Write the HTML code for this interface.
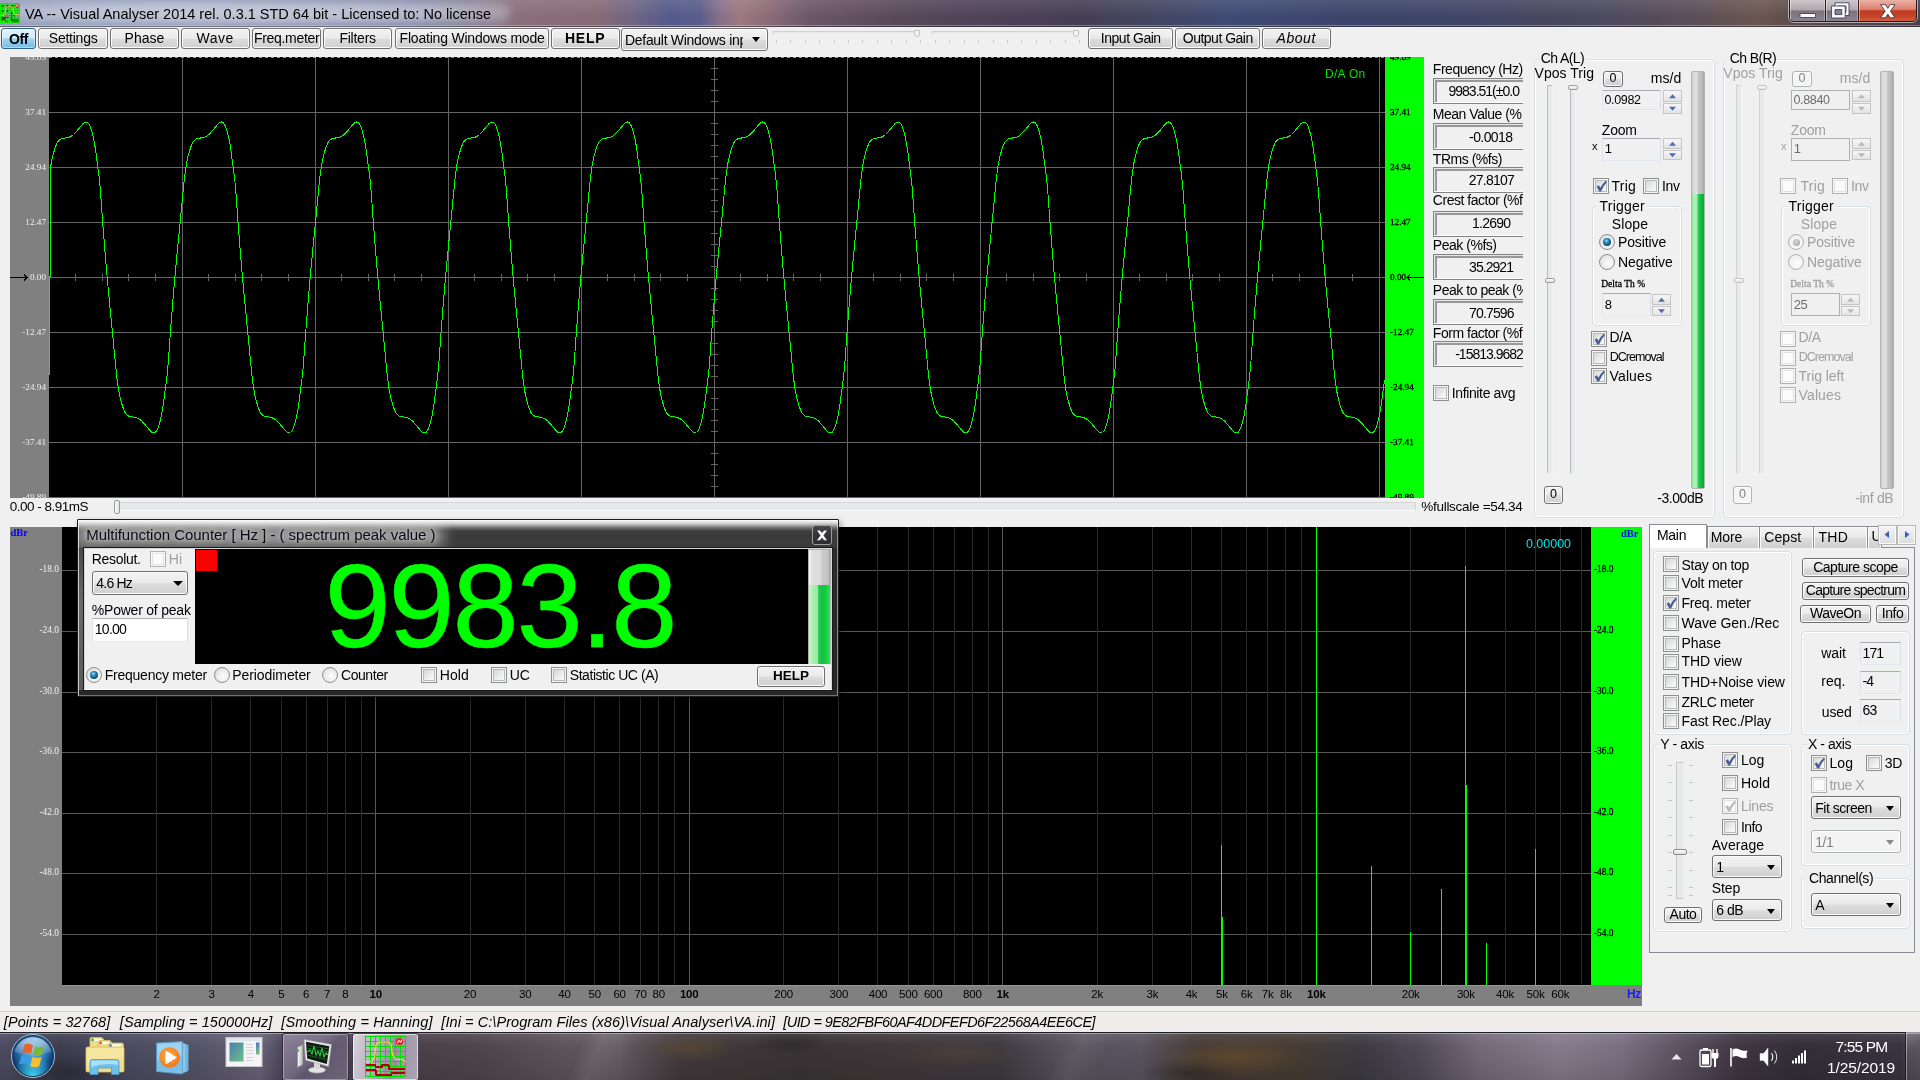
<!DOCTYPE html>
<html><head><meta charset="utf-8"><title>VA</title>
<style>
*{box-sizing:border-box;margin:0;padding:0}
html,body{width:1920px;height:1080px;overflow:hidden;background:#f0f0f0;font-family:"Liberation Sans",sans-serif;font-size:13px;color:#000}
.a{position:absolute}
.t{position:absolute;white-space:nowrap;line-height:16px;height:16px}
.dis{color:#a0a0a0}
.ser{font-family:"Liberation Serif",serif}
/* win7 button */
.btn{position:absolute;border:1px solid #707070;border-radius:3px;background:linear-gradient(#f2f2f2 0%,#ebebeb 48%,#dddddd 52%,#cfcfcf 100%);box-shadow:inset 0 0 0 1px #fcfcfc;text-align:center;white-space:nowrap;overflow:hidden}
.btn.dis{border-color:#adb2b5;background:#f4f4f4;color:#838383}
.cb{position:absolute;width:13px;height:13px;border:1px solid #8e8f8f;background:linear-gradient(135deg,#cfd0d0 0%,#f4f4f4 70%,#fbfbfb 100%);box-shadow:inset 0 0 0 1px #f4f4f4, inset 0 0 0 2px #b8b9b9}
.cb.d{border-color:#b1b1b1;background:#fbfbfb;box-shadow:inset 0 0 0 1px #f7f7f7, inset 0 0 0 2px #e2e2e2}
.rb{position:absolute;width:13px;height:13px;border:1px solid #8e8f8f;border-radius:50%;background:radial-gradient(circle at 60% 60%,#fdfdfd 0%,#e8e8e8 60%,#c8c8c8 100%)}
.rb.d{border-color:#b1b1b1;background:radial-gradient(circle at 60% 60%,#fefefe 0%,#f0f0f0 60%,#dddddd 100%)}
.grp{position:absolute;border:1px solid #d5dfe5;border-radius:4px;box-shadow:inset 0 0 0 1px #fff}
.sunk{position:absolute;border:1px solid #828282;box-shadow:inset 1px 1px 0 #e6e6e6, inset -1px -1px 0 #fff, inset 3px 3px 0 #999;background:#f0f0f0}
.ed{position:absolute;border:1px solid;border-color:#abadb3 #dbdfe6 #e3e9ef #e2e3ea;background:#f0f0f0}
.ed.d{border-color:#afafaf;color:#6d6d6d}
.spin{position:absolute;width:19px}
.spin i{position:absolute;left:0;width:19px;height:10px;border:1px solid #c4c4c4;background:linear-gradient(#f6f6f6,#e4e4e4)}
.combo{position:absolute;border:1px solid #707070;border-radius:3px;background:linear-gradient(#f2f2f2 0%,#ebebeb 48%,#dddddd 52%,#cfcfcf 100%);box-shadow:inset 0 0 0 1px #fcfcfc}
.combo.d{border-color:#adb2b5;background:#f4f4f4;color:#838383}
.arr{position:absolute;width:0;height:0;border-left:4.5px solid transparent;border-right:4.5px solid transparent;border-top:5px solid #000}
svg{position:absolute;overflow:visible}
</style></head><body><div id="root" style="position:absolute;left:0;top:0;width:1920px;height:1080px;will-change:transform">

<div class="a" style="left:0;top:0;width:1920px;height:29px;background:linear-gradient(180deg,rgba(255,255,255,.10) 0%,rgba(255,255,255,0) 60%),linear-gradient(90deg,#8f9bb8 0px,#8893b3 120px,#7f88aa 270px,#787d9f 420px,#80788e 480px,#8a6e78 520px,#866a76 600px,#6e6484 635px,#535a8c 670px,#5a5c8a 700px,#86708a 720px,#9c7880 740px,#8a6a76 770px,#6a5668 810px,#58485a 900px,#4c4156 1000px,#463e54 1080px,#424560 1150px,#3f4a74 1230px,#3b4469 1350px,#3f4567 1460px,#46465f 1540px,#4d4a5f 1610px,#5a4d57 1690px,#6a564f 1760px,#5e4c4c 1790px,#4a3f48 1920px)"></div>
<div class="a" style="left:0;top:26px;width:1920px;height:1px;background:rgba(40,40,50,.55)"></div>
<div class="a" style="left:0;top:25px;width:1920px;height:1px;background:rgba(225,228,235,.35)"></div>
<div class="a" style="left:10px;top:1px;width:500px;height:24px;border-radius:12px;background:radial-gradient(ellipse at center,rgba(255,255,255,.55) 0%,rgba(255,255,255,.45) 55%,rgba(255,255,255,0) 100%);filter:blur(4px)"></div>
<svg style="left:0;top:3px;overflow:hidden" width="20" height="20" viewBox="0 0 42 42"><rect x="0" y="0" width="42" height="42" fill="#b0a4d0"/><g stroke="#00dc00" stroke-width="2.5"><line x1="5.25" y1="0" x2="5.25" y2="42"/><line x1="0" y1="5.25" x2="42" y2="5.25"/><line x1="10.50" y1="0" x2="10.50" y2="42"/><line x1="0" y1="10.50" x2="42" y2="10.50"/><line x1="15.75" y1="0" x2="15.75" y2="42"/><line x1="0" y1="15.75" x2="42" y2="15.75"/><line x1="21.00" y1="0" x2="21.00" y2="42"/><line x1="0" y1="21.00" x2="42" y2="21.00"/><line x1="26.25" y1="0" x2="26.25" y2="42"/><line x1="0" y1="26.25" x2="42" y2="26.25"/><line x1="31.50" y1="0" x2="31.50" y2="42"/><line x1="0" y1="31.50" x2="42" y2="31.50"/><line x1="36.75" y1="0" x2="36.75" y2="42"/><line x1="0" y1="36.75" x2="42" y2="36.75"/></g><rect x="1.2" y="1.2" width="39.6" height="39.6" fill="none" stroke="#00f000" stroke-width="2.6"/><path d="M1.5 26.5 L8 26.5 L10.5 22 L12 10 L14 7 L25 7 L27 10 L28.5 20 L32 24.5 L38 24.5 L41.5 27" fill="none" stroke="#e8e020" stroke-width="1.8"/><g fill="#d80000"><rect x="2.5" y="29" width="16" height="2.4"/><rect x="2.5" y="34" width="10" height="2.4"/><rect x="23" y="30" width="2.6" height="6"/><rect x="25" y="38" width="14.5" height="2.2"/><rect x="12" y="38" width="4" height="2.2"/></g><g fill="#000" opacity=".8"><rect x="3" y="5" width="5" height="2.4"/><rect x="13" y="5" width="5" height="2"/><rect x="23" y="5" width="6" height="2"/><rect x="3" y="15.5" width="5" height="2.4"/><rect x="13" y="15.5" width="5" height="2"/><rect x="23" y="19" width="2.6" height="5"/><rect x="23" y="26" width="2.4" height="2.4"/><rect x="28.5" y="26" width="2.4" height="2.4"/><rect x="23" y="34.5" width="16" height="2"/><rect x="3" y="31.6" width="8" height="1.8"/></g><circle cx="35" cy="7" r="3.8" fill="#f01818"/><path d="M32.6 9.4 L35.2 4.6 L37.6 6.6" stroke="#fff" stroke-width="1.6" fill="none"/></svg>
<div class="t" id="ttl" style="left:25px;top:4px;font-size:14.5px;line-height:20px;height:20px;letter-spacing:0px;color:#000">VA -- Visual Analyser 2014 rel. 0.3.1 STD 64 bit - Licensed to: No license</div>
<div class="a" style="left:1788px;top:-1px;width:130px;height:24px;border:1px solid rgba(255,255,255,.55);border-radius:0 0 6px 6px"></div>
<div class="a" style="left:1789px;top:-1px;width:128px;height:23px;border:1px solid rgba(25,22,32,.9);border-radius:0 0 5px 5px;overflow:hidden"><div class="a" style="left:0;top:0;width:35px;height:22px;background:linear-gradient(#cdc5c9 0%,#b0a8ae 45%,#7c727a 50%,#857d88 80%,#8e8894 100%);box-shadow:inset 1px 0 0 rgba(255,255,255,.45),inset -1px 0 0 rgba(255,255,255,.3),inset 0 -1px 0 rgba(255,255,255,.3)"></div><div class="a" style="left:35px;top:0;width:1px;height:22px;background:rgba(25,22,32,.9)"></div><div class="a" style="left:36px;top:0;width:32px;height:22px;background:linear-gradient(#cdc5c9 0%,#b0a8ae 45%,#7c727a 50%,#857d88 80%,#8e8894 100%);box-shadow:inset 1px 0 0 rgba(255,255,255,.45),inset -1px 0 0 rgba(255,255,255,.3),inset 0 -1px 0 rgba(255,255,255,.3)"></div><div class="a" style="left:68px;top:0;width:1px;height:22px;background:rgba(60,20,15,.9)"></div><div class="a" style="left:69px;top:0;width:58px;height:22px;background:linear-gradient(#ecb0a2 0%,#dc8070 42%,#c03a20 50%,#c64428 75%,#d2644a 100%);box-shadow:inset 1px 0 0 rgba(255,255,255,.4),inset -1px 0 0 rgba(255,255,255,.3),inset 0 -1px 0 rgba(255,255,255,.35)"></div></div>
<svg style="left:1780px;top:0" width="140" height="24" viewBox="0 0 140 24"><rect x="20" y="13.5" width="15.5" height="4" rx=".5" fill="#fff" stroke="#3a4060" stroke-width=".9"/><path d="M55 2.8 L69 2.8 L69 15.5 L55 15.5 Z M58 6 L58 12.5 L66 12.5 L66 6 Z" fill="#fff" fill-rule="evenodd" stroke="#3a4060" stroke-width=".9"/><rect x="51.6" y="6" width="13.6" height="12" fill="#8a8088"/><path d="M51.6 6 L65.2 6 L65.2 18 L51.6 18 Z M55 9.6 L55 14.6 L61.8 14.6 L61.8 9.6 Z" fill="#fff" fill-rule="evenodd" stroke="#3a4060" stroke-width=".9"/><path d="M100.5 4.6 L105.4 4.6 L107.8 8.4 L110.2 4.6 L115 4.6 L110.4 11.2 L115 17.8 L110.2 17.8 L107.8 14 L105.4 17.8 L100.5 17.8 L105.2 11.2 Z" fill="#fff" stroke="#4a3a44" stroke-width=".9"/></svg>
<div class="a" style="left:0;top:27px;width:1920px;height:1053px;background:#f0f0f0"></div>
<div class="btn" style="left:1px;top:28px;width:35px;height:21px;line-height:20px;font-size:14px;letter-spacing:-.4px;border-color:#2c628b;box-shadow:inset 0 0 0 1px rgba(255,255,255,.45);background:linear-gradient(#e4f4fd 0%,#cdeafa 48%,#9ad2f1 52%,#76bbe4 100%);font-weight:bold">Off</div>
<div class="btn " style="left:38px;top:28px;width:70px;height:21px;line-height:18px;font-size:14px;letter-spacing:-0.24px;text-indent:0.24px;">Settings</div>
<div class="btn " style="left:110px;top:28px;width:69px;height:21px;line-height:18px;font-size:14px;letter-spacing:0.04px;text-indent:-0.04px;">Phase</div>
<div class="btn " style="left:181px;top:28px;width:69px;height:21px;line-height:18px;font-size:14px;letter-spacing:0.53px;text-indent:-0.53px;">Wave</div>
<div class="btn " style="left:252px;top:28px;width:69px;height:21px;line-height:18px;font-size:14px;letter-spacing:-0.31px;text-indent:0.31px;">Freq.meter</div>
<div class="btn " style="left:323px;top:28px;width:69px;height:21px;line-height:18px;font-size:14px;letter-spacing:-0.24px;text-indent:0.24px;">Filters</div>
<div class="btn " style="left:395px;top:28px;width:154px;height:21px;line-height:18px;font-size:14px;letter-spacing:-0.21px;text-indent:0.21px;">Floating Windows mode</div>
<div class="btn " style="left:1088px;top:28px;width:85px;height:21px;line-height:18px;font-size:14px;letter-spacing:-0.47px;text-indent:0.47px;">Input Gain</div>
<div class="btn " style="left:1175px;top:28px;width:85px;height:21px;line-height:18px;font-size:14px;letter-spacing:-0.51px;text-indent:0.51px;">Output Gain</div>
<div class="btn " style="left:551px;top:28px;width:69px;height:21px;line-height:18px;font-size:14px;letter-spacing:0.77px;text-indent:-0.77px;"><b>HELP</b></div>
<div class="btn " style="left:1262px;top:28px;width:69px;height:21px;line-height:18px;font-size:14px;letter-spacing:0.56px;text-indent:-0.56px;"><i>About</i></div>
<div class="combo" style="left:621px;top:28px;width:147px;height:23px"><div class="t" style="left:3px;top:3px;width:118px;overflow:hidden;font-size:14px;letter-spacing:-.3px;line-height:16px">Default Windows inp</div><div class="arr" style="left:130px;top:8px"></div></div>
<div class="a" style="left:773px;top:31px;width:147px;height:4px;border:1px solid #d0d0d0;border-bottom-color:#f8f8f8;background:#e7eaea"></div>
<div class="a" style="left:914px;top:30px;width:6px;height:7px;border:1px solid #c0c0c0;border-radius:1px 1px 3px 3px;background:#f4f4f4"></div>
<div class="a" style="left:776.0px;top:40px;width:1px;height:3px;background:#c8c8c8"></div><div class="a" style="left:790.4px;top:40px;width:1px;height:3px;background:#c8c8c8"></div><div class="a" style="left:804.8px;top:40px;width:1px;height:3px;background:#c8c8c8"></div><div class="a" style="left:819.2px;top:40px;width:1px;height:3px;background:#c8c8c8"></div><div class="a" style="left:833.6px;top:40px;width:1px;height:3px;background:#c8c8c8"></div><div class="a" style="left:848.0px;top:40px;width:1px;height:3px;background:#c8c8c8"></div><div class="a" style="left:862.4px;top:40px;width:1px;height:3px;background:#c8c8c8"></div><div class="a" style="left:876.8px;top:40px;width:1px;height:3px;background:#c8c8c8"></div><div class="a" style="left:891.2px;top:40px;width:1px;height:3px;background:#c8c8c8"></div><div class="a" style="left:905.6px;top:40px;width:1px;height:3px;background:#c8c8c8"></div><div class="a" style="left:920.0px;top:40px;width:1px;height:3px;background:#c8c8c8"></div>
<div class="a" style="left:932px;top:31px;width:147px;height:4px;border:1px solid #d0d0d0;border-bottom-color:#f8f8f8;background:#e7eaea"></div>
<div class="a" style="left:1073px;top:30px;width:6px;height:7px;border:1px solid #c0c0c0;border-radius:1px 1px 3px 3px;background:#f4f4f4"></div>
<div class="a" style="left:935.0px;top:40px;width:1px;height:3px;background:#c8c8c8"></div><div class="a" style="left:949.4px;top:40px;width:1px;height:3px;background:#c8c8c8"></div><div class="a" style="left:963.8px;top:40px;width:1px;height:3px;background:#c8c8c8"></div><div class="a" style="left:978.2px;top:40px;width:1px;height:3px;background:#c8c8c8"></div><div class="a" style="left:992.6px;top:40px;width:1px;height:3px;background:#c8c8c8"></div><div class="a" style="left:1007.0px;top:40px;width:1px;height:3px;background:#c8c8c8"></div><div class="a" style="left:1021.4px;top:40px;width:1px;height:3px;background:#c8c8c8"></div><div class="a" style="left:1035.8px;top:40px;width:1px;height:3px;background:#c8c8c8"></div><div class="a" style="left:1050.2px;top:40px;width:1px;height:3px;background:#c8c8c8"></div><div class="a" style="left:1064.6px;top:40px;width:1px;height:3px;background:#c8c8c8"></div><div class="a" style="left:1079.0px;top:40px;width:1px;height:3px;background:#c8c8c8"></div>
<div class="a" style="left:10px;top:57px;width:39px;height:441px;background:#808080"></div>
<div class="a" style="left:49px;top:57px;width:1336px;height:441px;background:#000"></div>
<div class="a" style="left:1385px;top:57px;width:39px;height:441px;background:#00ff00"></div>
<svg style="left:0;top:0" width="1920" height="520" viewBox="0 0 1920 520"><g stroke="#646464" stroke-width="1" shape-rendering="crispEdges"><line x1="182.5" y1="57" x2="182.5" y2="498"/><line x1="315.5" y1="57" x2="315.5" y2="498"/><line x1="448.5" y1="57" x2="448.5" y2="498"/><line x1="581.5" y1="57" x2="581.5" y2="498"/><line x1="714.5" y1="57" x2="714.5" y2="498"/><line x1="847.5" y1="57" x2="847.5" y2="498"/><line x1="980.5" y1="57" x2="980.5" y2="498"/><line x1="1113.5" y1="57" x2="1113.5" y2="498"/><line x1="1246.5" y1="57" x2="1246.5" y2="498"/><line x1="1379.5" y1="57" x2="1379.5" y2="498"/><line x1="49" y1="112.5" x2="1385" y2="112.5"/><line x1="49" y1="167.5" x2="1385" y2="167.5"/><line x1="49" y1="222.5" x2="1385" y2="222.5"/><line x1="49" y1="277.5" x2="1385" y2="277.5"/><line x1="49" y1="332.5" x2="1385" y2="332.5"/><line x1="49" y1="387.5" x2="1385" y2="387.5"/><line x1="49" y1="442.5" x2="1385" y2="442.5"/><line x1="49" y1="497.5" x2="1385" y2="497.5"/><line x1="75.5" y1="274" x2="75.5" y2="281"/><line x1="102.5" y1="274" x2="102.5" y2="281"/><line x1="128.5" y1="274" x2="128.5" y2="281"/><line x1="155.5" y1="274" x2="155.5" y2="281"/><line x1="208.5" y1="274" x2="208.5" y2="281"/><line x1="235.5" y1="274" x2="235.5" y2="281"/><line x1="261.5" y1="274" x2="261.5" y2="281"/><line x1="288.5" y1="274" x2="288.5" y2="281"/><line x1="341.5" y1="274" x2="341.5" y2="281"/><line x1="368.5" y1="274" x2="368.5" y2="281"/><line x1="394.5" y1="274" x2="394.5" y2="281"/><line x1="421.5" y1="274" x2="421.5" y2="281"/><line x1="474.5" y1="274" x2="474.5" y2="281"/><line x1="501.5" y1="274" x2="501.5" y2="281"/><line x1="527.5" y1="274" x2="527.5" y2="281"/><line x1="554.5" y1="274" x2="554.5" y2="281"/><line x1="607.5" y1="274" x2="607.5" y2="281"/><line x1="634.5" y1="274" x2="634.5" y2="281"/><line x1="660.5" y1="274" x2="660.5" y2="281"/><line x1="687.5" y1="274" x2="687.5" y2="281"/><line x1="740.5" y1="274" x2="740.5" y2="281"/><line x1="767.5" y1="274" x2="767.5" y2="281"/><line x1="793.5" y1="274" x2="793.5" y2="281"/><line x1="820.5" y1="274" x2="820.5" y2="281"/><line x1="873.5" y1="274" x2="873.5" y2="281"/><line x1="900.5" y1="274" x2="900.5" y2="281"/><line x1="926.5" y1="274" x2="926.5" y2="281"/><line x1="953.5" y1="274" x2="953.5" y2="281"/><line x1="1006.5" y1="274" x2="1006.5" y2="281"/><line x1="1033.5" y1="274" x2="1033.5" y2="281"/><line x1="1059.5" y1="274" x2="1059.5" y2="281"/><line x1="1086.5" y1="274" x2="1086.5" y2="281"/><line x1="1139.5" y1="274" x2="1139.5" y2="281"/><line x1="1166.5" y1="274" x2="1166.5" y2="281"/><line x1="1192.5" y1="274" x2="1192.5" y2="281"/><line x1="1219.5" y1="274" x2="1219.5" y2="281"/><line x1="1272.5" y1="274" x2="1272.5" y2="281"/><line x1="1299.5" y1="274" x2="1299.5" y2="281"/><line x1="1325.5" y1="274" x2="1325.5" y2="281"/><line x1="1352.5" y1="274" x2="1352.5" y2="281"/><line x1="711" y1="68.5" x2="718" y2="68.5"/><line x1="711" y1="79.5" x2="718" y2="79.5"/><line x1="711" y1="90.5" x2="718" y2="90.5"/><line x1="711" y1="101.5" x2="718" y2="101.5"/><line x1="711" y1="123.5" x2="718" y2="123.5"/><line x1="711" y1="134.5" x2="718" y2="134.5"/><line x1="711" y1="145.5" x2="718" y2="145.5"/><line x1="711" y1="156.5" x2="718" y2="156.5"/><line x1="711" y1="178.5" x2="718" y2="178.5"/><line x1="711" y1="189.5" x2="718" y2="189.5"/><line x1="711" y1="200.5" x2="718" y2="200.5"/><line x1="711" y1="211.5" x2="718" y2="211.5"/><line x1="711" y1="233.5" x2="718" y2="233.5"/><line x1="711" y1="244.5" x2="718" y2="244.5"/><line x1="711" y1="255.5" x2="718" y2="255.5"/><line x1="711" y1="266.5" x2="718" y2="266.5"/><line x1="711" y1="288.5" x2="718" y2="288.5"/><line x1="711" y1="299.5" x2="718" y2="299.5"/><line x1="711" y1="310.5" x2="718" y2="310.5"/><line x1="711" y1="321.5" x2="718" y2="321.5"/><line x1="711" y1="343.5" x2="718" y2="343.5"/><line x1="711" y1="354.5" x2="718" y2="354.5"/><line x1="711" y1="365.5" x2="718" y2="365.5"/><line x1="711" y1="376.5" x2="718" y2="376.5"/><line x1="711" y1="398.5" x2="718" y2="398.5"/><line x1="711" y1="409.5" x2="718" y2="409.5"/><line x1="711" y1="420.5" x2="718" y2="420.5"/><line x1="711" y1="431.5" x2="718" y2="431.5"/><line x1="711" y1="453.5" x2="718" y2="453.5"/><line x1="711" y1="464.5" x2="718" y2="464.5"/><line x1="711" y1="475.5" x2="718" y2="475.5"/><line x1="711" y1="486.5" x2="718" y2="486.5"/></g><g stroke="#6aa86a" stroke-width="1" shape-rendering="crispEdges"><line x1="1385" y1="57.5" x2="1388" y2="57.5"/><line x1="1385" y1="68.5" x2="1388" y2="68.5"/><line x1="1385" y1="79.5" x2="1388" y2="79.5"/><line x1="1385" y1="90.5" x2="1388" y2="90.5"/><line x1="1385" y1="101.5" x2="1388" y2="101.5"/><line x1="1385" y1="112.5" x2="1388" y2="112.5"/><line x1="1385" y1="123.5" x2="1388" y2="123.5"/><line x1="1385" y1="134.5" x2="1388" y2="134.5"/><line x1="1385" y1="145.5" x2="1388" y2="145.5"/><line x1="1385" y1="156.5" x2="1388" y2="156.5"/><line x1="1385" y1="167.5" x2="1388" y2="167.5"/><line x1="1385" y1="178.5" x2="1388" y2="178.5"/><line x1="1385" y1="189.5" x2="1388" y2="189.5"/><line x1="1385" y1="200.5" x2="1388" y2="200.5"/><line x1="1385" y1="211.5" x2="1388" y2="211.5"/><line x1="1385" y1="222.5" x2="1388" y2="222.5"/><line x1="1385" y1="233.5" x2="1388" y2="233.5"/><line x1="1385" y1="244.5" x2="1388" y2="244.5"/><line x1="1385" y1="255.5" x2="1388" y2="255.5"/><line x1="1385" y1="266.5" x2="1388" y2="266.5"/><line x1="1385" y1="277.5" x2="1388" y2="277.5"/><line x1="1385" y1="288.5" x2="1388" y2="288.5"/><line x1="1385" y1="299.5" x2="1388" y2="299.5"/><line x1="1385" y1="310.5" x2="1388" y2="310.5"/><line x1="1385" y1="321.5" x2="1388" y2="321.5"/><line x1="1385" y1="332.5" x2="1388" y2="332.5"/><line x1="1385" y1="343.5" x2="1388" y2="343.5"/><line x1="1385" y1="354.5" x2="1388" y2="354.5"/><line x1="1385" y1="365.5" x2="1388" y2="365.5"/><line x1="1385" y1="376.5" x2="1388" y2="376.5"/><line x1="1385" y1="387.5" x2="1388" y2="387.5"/><line x1="1385" y1="398.5" x2="1388" y2="398.5"/><line x1="1385" y1="409.5" x2="1388" y2="409.5"/><line x1="1385" y1="420.5" x2="1388" y2="420.5"/><line x1="1385" y1="431.5" x2="1388" y2="431.5"/><line x1="1385" y1="442.5" x2="1388" y2="442.5"/><line x1="1385" y1="453.5" x2="1388" y2="453.5"/><line x1="1385" y1="464.5" x2="1388" y2="464.5"/><line x1="1385" y1="475.5" x2="1388" y2="475.5"/><line x1="1385" y1="486.5" x2="1388" y2="486.5"/><line x1="1385" y1="497.5" x2="1388" y2="497.5"/></g><line x1="49" y1="57.5" x2="1385" y2="57.5" stroke="#00ff00" stroke-width="1" stroke-dasharray="3 3" shape-rendering="crispEdges"/><path d="M49.5 375 L49.5 276 L50.5 276 L50.5 172 L50.5 167.5 L51.5 161.7 L52.5 157.0 L53.5 153.2 L54.5 150.0 L55.5 146.9 L56.5 144.2 L57.5 142.2 L58.5 140.9 L59.5 139.9 L60.5 139.1 L61.5 138.7 L62.5 138.5 L63.5 138.3 L64.5 138.1 L65.5 138.0 L66.5 137.9 L67.5 137.7 L68.5 137.4 L69.5 137.0 L70.5 136.6 L71.5 136.0 L72.5 135.3 L73.5 134.5 L74.5 133.5 L75.5 132.5 L76.5 131.4 L77.5 130.2 L78.5 129.1 L79.5 127.9 L80.5 126.6 L81.5 125.3 L82.5 124.2 L83.5 123.2 L84.5 122.4 L85.5 122.1 L86.5 122.1 L87.5 122.5 L88.5 123.5 L89.5 125.1 L90.5 127.5 L91.5 130.6 L92.5 134.0 L93.5 138.2 L94.5 143.3 L95.5 149.5 L96.5 157.0 L97.5 164.8 L98.5 172.2 L99.5 180.4 L100.5 191.4 L101.5 205.5 L102.5 219.9 L103.5 232.8 L104.5 245.4 L105.5 257.7 L106.5 269.7 L107.5 281.1 L108.5 291.7 L109.5 302.2 L110.5 312.6 L111.5 322.8 L112.5 332.9 L113.5 343.2 L114.5 353.9 L115.5 364.4 L116.5 374.2 L117.5 382.7 L118.5 389.6 L119.5 395.0 L120.5 399.4 L121.5 402.9 L122.5 406.0 L123.5 409.0 L124.5 411.6 L125.5 413.3 L126.5 414.5 L127.5 415.4 L128.5 416.0 L129.5 416.4 L130.5 416.6 L131.5 416.8 L132.5 417.0 L133.5 417.1 L134.5 417.2 L135.5 417.4 L136.5 417.7 L137.5 418.1 L138.5 418.6 L139.5 419.2 L140.5 419.9 L141.5 420.8 L142.5 421.8 L143.5 422.9 L144.5 424.0 L145.5 425.1 L146.5 426.3 L147.5 427.6 L148.5 428.9 L149.5 430.1 L150.5 431.1 L151.5 432.1 L152.5 432.7 L153.5 433.0 L154.5 432.8 L155.5 432.3 L156.5 431.0 L157.5 429.2 L158.5 426.5 L159.5 423.3 L160.5 419.7 L161.5 415.2 L162.5 409.8 L163.5 403.1 L164.5 395.3 L165.5 387.7 L166.5 380.2 L167.5 371.3 L168.5 359.1 L169.5 344.6 L170.5 330.8 L171.5 318.0 L172.5 305.5 L173.5 293.2 L174.5 281.3 L175.5 270.3 L176.5 259.8 L177.5 249.3 L178.5 239.0 L179.5 228.8 L180.5 218.7 L181.5 208.2 L182.5 197.5 L183.5 187.2 L184.5 177.8 L185.5 169.8 L186.5 163.5 L187.5 158.4 L188.5 154.4 L189.5 151.0 L190.5 148.0 L191.5 145.0 L192.5 142.7 L193.5 141.3 L194.5 140.2 L195.5 139.3 L196.5 138.8 L197.5 138.5 L198.5 138.3 L199.5 138.2 L200.5 138.0 L201.5 137.9 L202.5 137.8 L203.5 137.5 L204.5 137.2 L205.5 136.7 L206.5 136.2 L207.5 135.6 L208.5 134.8 L209.5 133.9 L210.5 132.8 L211.5 131.7 L212.5 130.6 L213.5 129.5 L214.5 128.3 L215.5 127.0 L216.5 125.7 L217.5 124.5 L218.5 123.5 L219.5 122.6 L220.5 122.2 L221.5 122.0 L222.5 122.3 L223.5 123.1 L224.5 124.5 L225.5 126.6 L226.5 129.5 L227.5 132.8 L228.5 136.7 L229.5 141.5 L230.5 147.3 L231.5 154.5 L232.5 162.3 L233.5 169.7 L234.5 177.5 L235.5 187.3 L236.5 200.7 L237.5 215.3 L238.5 228.6 L239.5 241.2 L240.5 253.7 L241.5 265.8 L242.5 277.6 L243.5 288.2 L244.5 298.8 L245.5 309.2 L246.5 319.4 L247.5 329.5 L248.5 339.7 L249.5 350.4 L250.5 361.0 L251.5 371.1 L252.5 380.1 L253.5 387.5 L254.5 393.3 L255.5 398.0 L256.5 401.8 L257.5 405.0 L258.5 408.1 L259.5 410.8 L260.5 412.8 L261.5 414.1 L262.5 415.1 L263.5 415.9 L264.5 416.3 L265.5 416.5 L266.5 416.7 L267.5 416.9 L268.5 417.0 L269.5 417.1 L270.5 417.3 L271.5 417.6 L272.5 418.0 L273.5 418.5 L274.5 419.0 L275.5 419.7 L276.5 420.5 L277.5 421.5 L278.5 422.5 L279.5 423.6 L280.5 424.8 L281.5 425.9 L282.5 427.1 L283.5 428.5 L284.5 429.7 L285.5 430.8 L286.5 431.8 L287.5 432.6 L288.5 432.9 L289.5 432.9 L290.5 432.5 L291.5 431.5 L292.5 429.9 L293.5 427.5 L294.5 424.4 L295.5 421.0 L296.5 416.7 L297.5 411.7 L298.5 405.5 L299.5 397.9 L300.5 390.2 L301.5 382.8 L302.5 374.5 L303.5 363.5 L304.5 349.4 L305.5 335.1 L306.5 322.2 L307.5 309.6 L308.5 297.2 L309.5 285.2 L310.5 273.9 L311.5 263.2 L312.5 252.7 L313.5 242.4 L314.5 232.2 L315.5 222.1 L316.5 211.7 L317.5 201.0 L318.5 190.5 L319.5 180.8 L320.5 172.2 L321.5 165.4 L322.5 160.0 L323.5 155.6 L324.5 152.1 L325.5 149.0 L326.5 145.9 L327.5 143.4 L328.5 141.7 L329.5 140.5 L330.5 139.6 L331.5 139.0 L332.5 138.6 L333.5 138.4 L334.5 138.2 L335.5 138.0 L336.5 137.9 L337.5 137.8 L338.5 137.6 L339.5 137.3 L340.5 136.9 L341.5 136.4 L342.5 135.8 L343.5 135.1 L344.5 134.2 L345.5 133.2 L346.5 132.1 L347.5 131.0 L348.5 129.9 L349.5 128.7 L350.5 127.4 L351.5 126.1 L352.5 124.9 L353.5 123.9 L354.5 122.9 L355.5 122.3 L356.5 122.0 L357.5 122.2 L358.5 122.7 L359.5 124.0 L360.5 125.8 L361.5 128.5 L362.5 131.7 L363.5 135.3 L364.5 139.9 L365.5 145.2 L366.5 152.0 L367.5 159.7 L368.5 167.3 L369.5 174.8 L370.5 183.7 L371.5 196.0 L372.5 210.5 L373.5 224.3 L374.5 237.1 L375.5 249.6 L376.5 261.8 L377.5 273.7 L378.5 284.7 L379.5 295.3 L380.5 305.7 L381.5 316.0 L382.5 326.2 L383.5 336.3 L384.5 346.8 L385.5 357.5 L386.5 367.8 L387.5 377.3 L388.5 385.3 L389.5 391.6 L390.5 396.6 L391.5 400.6 L392.5 404.0 L393.5 407.1 L394.5 410.0 L395.5 412.3 L396.5 413.7 L397.5 414.8 L398.5 415.7 L399.5 416.2 L400.5 416.5 L401.5 416.7 L402.5 416.8 L403.5 417.0 L404.5 417.1 L405.5 417.2 L406.5 417.5 L407.5 417.8 L408.5 418.3 L409.5 418.8 L410.5 419.4 L411.5 420.2 L412.5 421.1 L413.5 422.2 L414.5 423.3 L415.5 424.4 L416.5 425.5 L417.5 426.7 L418.5 428.0 L419.5 429.3 L420.5 430.5 L421.5 431.5 L422.5 432.4 L423.5 432.8 L424.5 433.0 L425.5 432.7 L426.5 431.9 L427.5 430.5 L428.5 428.4 L429.5 425.5 L430.5 422.1 L431.5 418.2 L432.5 413.4 L433.5 407.7 L434.5 400.5 L435.5 392.7 L436.5 385.2 L437.5 377.4 L438.5 367.6 L439.5 354.3 L440.5 339.7 L441.5 326.4 L442.5 313.7 L443.5 301.3 L444.5 289.2 L445.5 277.4 L446.5 266.7 L447.5 256.2 L448.5 245.8 L449.5 235.5 L450.5 225.4 L451.5 215.2 L452.5 204.6 L453.5 194.0 L454.5 183.9 L455.5 174.9 L456.5 167.4 L457.5 161.6 L458.5 157.0 L459.5 153.2 L460.5 150.0 L461.5 146.9 L462.5 144.2 L463.5 142.2 L464.5 140.9 L465.5 139.9 L466.5 139.1 L467.5 138.7 L468.5 138.5 L469.5 138.3 L470.5 138.1 L471.5 138.0 L472.5 137.9 L473.5 137.7 L474.5 137.4 L475.5 137.0 L476.5 136.5 L477.5 136.0 L478.5 135.3 L479.5 134.5 L480.5 133.5 L481.5 132.5 L482.5 131.4 L483.5 130.2 L484.5 129.1 L485.5 127.9 L486.5 126.5 L487.5 125.3 L488.5 124.2 L489.5 123.2 L490.5 122.4 L491.5 122.1 L492.5 122.1 L493.5 122.5 L494.5 123.5 L495.5 125.1 L496.5 127.5 L497.5 130.6 L498.5 134.1 L499.5 138.3 L500.5 143.4 L501.5 149.6 L502.5 157.1 L503.5 164.9 L504.5 172.3 L505.5 180.5 L506.5 191.5 L507.5 205.6 L508.5 220.0 L509.5 232.9 L510.5 245.5 L511.5 257.8 L512.5 269.8 L513.5 281.2 L514.5 291.8 L515.5 302.3 L516.5 312.7 L517.5 322.9 L518.5 333.0 L519.5 343.3 L520.5 354.0 L521.5 364.5 L522.5 374.3 L523.5 382.8 L524.5 389.7 L525.5 395.1 L526.5 399.4 L527.5 403.0 L528.5 406.1 L529.5 409.1 L530.5 411.6 L531.5 413.3 L532.5 414.5 L533.5 415.4 L534.5 416.0 L535.5 416.4 L536.5 416.6 L537.5 416.8 L538.5 417.0 L539.5 417.1 L540.5 417.2 L541.5 417.4 L542.5 417.7 L543.5 418.1 L544.5 418.6 L545.5 419.2 L546.5 419.9 L547.5 420.8 L548.5 421.8 L549.5 422.9 L550.5 424.0 L551.5 425.1 L552.5 426.3 L553.5 427.6 L554.5 428.9 L555.5 430.1 L556.5 431.1 L557.5 432.1 L558.5 432.7 L559.5 433.0 L560.5 432.8 L561.5 432.3 L562.5 431.0 L563.5 429.2 L564.5 426.5 L565.5 423.3 L566.5 419.6 L567.5 415.1 L568.5 409.7 L569.5 403.0 L570.5 395.2 L571.5 387.6 L572.5 380.1 L573.5 371.2 L574.5 358.9 L575.5 344.4 L576.5 330.6 L577.5 317.8 L578.5 305.3 L579.5 293.1 L580.5 281.2 L581.5 270.2 L582.5 259.7 L583.5 249.2 L584.5 238.9 L585.5 228.7 L586.5 218.6 L587.5 208.1 L588.5 197.4 L589.5 187.1 L590.5 177.7 L591.5 169.7 L592.5 163.4 L593.5 158.4 L594.5 154.3 L595.5 151.0 L596.5 147.9 L597.5 145.0 L598.5 142.7 L599.5 141.3 L600.5 140.2 L601.5 139.3 L602.5 138.8 L603.5 138.5 L604.5 138.3 L605.5 138.2 L606.5 138.0 L607.5 137.9 L608.5 137.8 L609.5 137.5 L610.5 137.2 L611.5 136.7 L612.5 136.2 L613.5 135.6 L614.5 134.8 L615.5 133.8 L616.5 132.8 L617.5 131.7 L618.5 130.6 L619.5 129.5 L620.5 128.3 L621.5 127.0 L622.5 125.7 L623.5 124.5 L624.5 123.5 L625.5 122.6 L626.5 122.2 L627.5 122.0 L628.5 122.3 L629.5 123.1 L630.5 124.5 L631.5 126.7 L632.5 129.5 L633.5 132.9 L634.5 136.8 L635.5 141.6 L636.5 147.3 L637.5 154.5 L638.5 162.4 L639.5 169.8 L640.5 177.6 L641.5 187.4 L642.5 200.8 L643.5 215.4 L644.5 228.7 L645.5 241.4 L646.5 253.8 L647.5 265.9 L648.5 277.7 L649.5 288.3 L650.5 298.9 L651.5 309.3 L652.5 319.5 L653.5 329.6 L654.5 339.8 L655.5 350.5 L656.5 361.1 L657.5 371.2 L658.5 380.2 L659.5 387.6 L660.5 393.4 L661.5 398.1 L662.5 401.8 L663.5 405.0 L664.5 408.1 L665.5 410.9 L666.5 412.8 L667.5 414.1 L668.5 415.1 L669.5 415.9 L670.5 416.3 L671.5 416.5 L672.5 416.7 L673.5 416.9 L674.5 417.0 L675.5 417.1 L676.5 417.3 L677.5 417.6 L678.5 418.0 L679.5 418.5 L680.5 419.0 L681.5 419.7 L682.5 420.5 L683.5 421.5 L684.5 422.5 L685.5 423.7 L686.5 424.8 L687.5 425.9 L688.5 427.1 L689.5 428.5 L690.5 429.7 L691.5 430.8 L692.5 431.8 L693.5 432.6 L694.5 432.9 L695.5 432.9 L696.5 432.5 L697.5 431.5 L698.5 429.9 L699.5 427.5 L700.5 424.4 L701.5 420.9 L702.5 416.7 L703.5 411.6 L704.5 405.4 L705.5 397.8 L706.5 390.1 L707.5 382.7 L708.5 374.4 L709.5 363.4 L710.5 349.3 L711.5 334.9 L712.5 322.0 L713.5 309.4 L714.5 297.1 L715.5 285.1 L716.5 273.8 L717.5 263.1 L718.5 252.6 L719.5 242.3 L720.5 232.1 L721.5 222.0 L722.5 211.6 L723.5 200.9 L724.5 190.4 L725.5 180.7 L726.5 172.1 L727.5 165.3 L728.5 159.9 L729.5 155.6 L730.5 152.0 L731.5 148.9 L732.5 145.9 L733.5 143.4 L734.5 141.7 L735.5 140.5 L736.5 139.6 L737.5 139.0 L738.5 138.6 L739.5 138.4 L740.5 138.2 L741.5 138.0 L742.5 137.9 L743.5 137.8 L744.5 137.6 L745.5 137.3 L746.5 136.9 L747.5 136.4 L748.5 135.8 L749.5 135.1 L750.5 134.2 L751.5 133.2 L752.5 132.1 L753.5 131.0 L754.5 129.9 L755.5 128.7 L756.5 127.4 L757.5 126.1 L758.5 124.9 L759.5 123.9 L760.5 122.9 L761.5 122.3 L762.5 122.0 L763.5 122.2 L764.5 122.7 L765.5 124.0 L766.5 125.8 L767.5 128.5 L768.5 131.7 L769.5 135.4 L770.5 139.9 L771.5 145.3 L772.5 152.0 L773.5 159.8 L774.5 167.4 L775.5 174.9 L776.5 183.8 L777.5 196.1 L778.5 210.6 L779.5 224.4 L780.5 237.2 L781.5 249.7 L782.5 261.9 L783.5 273.8 L784.5 284.8 L785.5 295.4 L786.5 305.8 L787.5 316.2 L788.5 326.3 L789.5 336.4 L790.5 347.0 L791.5 357.6 L792.5 367.9 L793.5 377.4 L794.5 385.4 L795.5 391.6 L796.5 396.6 L797.5 400.7 L798.5 404.0 L799.5 407.1 L800.5 410.0 L801.5 412.3 L802.5 413.7 L803.5 414.8 L804.5 415.7 L805.5 416.2 L806.5 416.5 L807.5 416.7 L808.5 416.8 L809.5 417.0 L810.5 417.1 L811.5 417.2 L812.5 417.5 L813.5 417.8 L814.5 418.3 L815.5 418.8 L816.5 419.4 L817.5 420.2 L818.5 421.2 L819.5 422.2 L820.5 423.3 L821.5 424.4 L822.5 425.5 L823.5 426.7 L824.5 428.0 L825.5 429.3 L826.5 430.5 L827.5 431.5 L828.5 432.4 L829.5 432.8 L830.5 433.0 L831.5 432.7 L832.5 431.9 L833.5 430.5 L834.5 428.3 L835.5 425.5 L836.5 422.1 L837.5 418.2 L838.5 413.4 L839.5 407.6 L840.5 400.4 L841.5 392.6 L842.5 385.2 L843.5 377.4 L844.5 367.5 L845.5 354.1 L846.5 339.5 L847.5 326.3 L848.5 313.6 L849.5 301.1 L850.5 289.0 L851.5 277.3 L852.5 266.6 L853.5 256.1 L854.5 245.7 L855.5 235.4 L856.5 225.3 L857.5 215.1 L858.5 204.5 L859.5 193.8 L860.5 183.8 L861.5 174.8 L862.5 167.4 L863.5 161.6 L864.5 156.9 L865.5 153.1 L866.5 149.9 L867.5 146.9 L868.5 144.1 L869.5 142.2 L870.5 140.9 L871.5 139.8 L872.5 139.1 L873.5 138.7 L874.5 138.5 L875.5 138.3 L876.5 138.1 L877.5 138.0 L878.5 137.9 L879.5 137.7 L880.5 137.4 L881.5 137.0 L882.5 136.5 L883.5 136.0 L884.5 135.3 L885.5 134.5 L886.5 133.5 L887.5 132.4 L888.5 131.3 L889.5 130.2 L890.5 129.1 L891.5 127.8 L892.5 126.5 L893.5 125.3 L894.5 124.2 L895.5 123.2 L896.5 122.4 L897.5 122.1 L898.5 122.1 L899.5 122.5 L900.5 123.5 L901.5 125.1 L902.5 127.6 L903.5 130.6 L904.5 134.1 L905.5 138.3 L906.5 143.4 L907.5 149.6 L908.5 157.2 L909.5 165.0 L910.5 172.3 L911.5 180.6 L912.5 191.7 L913.5 205.8 L914.5 220.1 L915.5 233.0 L916.5 245.6 L917.5 257.9 L918.5 269.9 L919.5 281.3 L920.5 291.9 L921.5 302.4 L922.5 312.8 L923.5 323.0 L924.5 333.1 L925.5 343.4 L926.5 354.1 L927.5 364.6 L928.5 374.4 L929.5 382.9 L930.5 389.7 L931.5 395.1 L932.5 399.4 L933.5 403.0 L934.5 406.1 L935.5 409.1 L936.5 411.6 L937.5 413.3 L938.5 414.5 L939.5 415.4 L940.5 416.0 L941.5 416.4 L942.5 416.6 L943.5 416.8 L944.5 417.0 L945.5 417.1 L946.5 417.2 L947.5 417.4 L948.5 417.7 L949.5 418.1 L950.5 418.6 L951.5 419.2 L952.5 420.0 L953.5 420.8 L954.5 421.8 L955.5 422.9 L956.5 424.0 L957.5 425.1 L958.5 426.3 L959.5 427.6 L960.5 428.9 L961.5 430.1 L962.5 431.2 L963.5 432.1 L964.5 432.7 L965.5 433.0 L966.5 432.8 L967.5 432.3 L968.5 431.0 L969.5 429.1 L970.5 426.5 L971.5 423.2 L972.5 419.6 L973.5 415.1 L974.5 409.7 L975.5 402.9 L976.5 395.2 L977.5 387.6 L978.5 380.1 L979.5 371.1 L980.5 358.8 L981.5 344.3 L982.5 330.5 L983.5 317.7 L984.5 305.2 L985.5 293.0 L986.5 281.1 L987.5 270.1 L988.5 259.6 L989.5 249.1 L990.5 238.8 L991.5 228.6 L992.5 218.5 L993.5 208.0 L994.5 197.3 L995.5 187.0 L996.5 177.6 L997.5 169.6 L998.5 163.3 L999.5 158.3 L1000.5 154.3 L1001.5 150.9 L1002.5 147.9 L1003.5 145.0 L1004.5 142.7 L1005.5 141.3 L1006.5 140.2 L1007.5 139.3 L1008.5 138.8 L1009.5 138.5 L1010.5 138.3 L1011.5 138.2 L1012.5 138.0 L1013.5 137.9 L1014.5 137.8 L1015.5 137.5 L1016.5 137.2 L1017.5 136.7 L1018.5 136.2 L1019.5 135.6 L1020.5 134.8 L1021.5 133.8 L1022.5 132.8 L1023.5 131.7 L1024.5 130.6 L1025.5 129.5 L1026.5 128.3 L1027.5 127.0 L1028.5 125.7 L1029.5 124.5 L1030.5 123.5 L1031.5 122.6 L1032.5 122.2 L1033.5 122.0 L1034.5 122.3 L1035.5 123.1 L1036.5 124.5 L1037.5 126.7 L1038.5 129.6 L1039.5 132.9 L1040.5 136.8 L1041.5 141.7 L1042.5 147.4 L1043.5 154.6 L1044.5 162.5 L1045.5 169.9 L1046.5 177.7 L1047.5 187.6 L1048.5 201.0 L1049.5 215.5 L1050.5 228.8 L1051.5 241.5 L1052.5 253.9 L1053.5 266.0 L1054.5 277.8 L1055.5 288.4 L1056.5 299.0 L1057.5 309.4 L1058.5 319.6 L1059.5 329.7 L1060.5 339.9 L1061.5 350.6 L1062.5 361.2 L1063.5 371.3 L1064.5 380.3 L1065.5 387.7 L1066.5 393.5 L1067.5 398.1 L1068.5 401.9 L1069.5 405.1 L1070.5 408.1 L1071.5 410.9 L1072.5 412.8 L1073.5 414.1 L1074.5 415.2 L1075.5 415.9 L1076.5 416.3 L1077.5 416.5 L1078.5 416.7 L1079.5 416.9 L1080.5 417.0 L1081.5 417.1 L1082.5 417.3 L1083.5 417.6 L1084.5 418.0 L1085.5 418.5 L1086.5 419.0 L1087.5 419.7 L1088.5 420.5 L1089.5 421.5 L1090.5 422.6 L1091.5 423.7 L1092.5 424.8 L1093.5 425.9 L1094.5 427.2 L1095.5 428.5 L1096.5 429.7 L1097.5 430.8 L1098.5 431.8 L1099.5 432.6 L1100.5 432.9 L1101.5 432.9 L1102.5 432.5 L1103.5 431.5 L1104.5 429.9 L1105.5 427.4 L1106.5 424.4 L1107.5 420.9 L1108.5 416.7 L1109.5 411.5 L1110.5 405.3 L1111.5 397.8 L1112.5 390.0 L1113.5 382.6 L1114.5 374.3 L1115.5 363.3 L1116.5 349.1 L1117.5 334.8 L1118.5 321.9 L1119.5 309.3 L1120.5 297.0 L1121.5 285.0 L1122.5 273.6 L1123.5 263.0 L1124.5 252.5 L1125.5 242.2 L1126.5 232.0 L1127.5 221.9 L1128.5 211.5 L1129.5 200.8 L1130.5 190.3 L1131.5 180.6 L1132.5 172.1 L1133.5 165.3 L1134.5 159.9 L1135.5 155.5 L1136.5 152.0 L1137.5 148.9 L1138.5 145.9 L1139.5 143.3 L1140.5 141.7 L1141.5 140.5 L1142.5 139.6 L1143.5 139.0 L1144.5 138.6 L1145.5 138.4 L1146.5 138.2 L1147.5 138.0 L1148.5 137.9 L1149.5 137.8 L1150.5 137.6 L1151.5 137.3 L1152.5 136.9 L1153.5 136.4 L1154.5 135.8 L1155.5 135.0 L1156.5 134.2 L1157.5 133.2 L1158.5 132.1 L1159.5 131.0 L1160.5 129.9 L1161.5 128.7 L1162.5 127.4 L1163.5 126.1 L1164.5 124.9 L1165.5 123.8 L1166.5 122.9 L1167.5 122.3 L1168.5 122.0 L1169.5 122.2 L1170.5 122.8 L1171.5 124.0 L1172.5 125.9 L1173.5 128.5 L1174.5 131.8 L1175.5 135.4 L1176.5 140.0 L1177.5 145.3 L1178.5 152.1 L1179.5 159.9 L1180.5 167.5 L1181.5 175.0 L1182.5 183.9 L1183.5 196.3 L1184.5 210.8 L1185.5 224.6 L1186.5 237.3 L1187.5 249.9 L1188.5 262.1 L1189.5 273.9 L1190.5 284.9 L1191.5 295.5 L1192.5 305.9 L1193.5 316.3 L1194.5 326.4 L1195.5 336.5 L1196.5 347.1 L1197.5 357.7 L1198.5 368.0 L1199.5 377.4 L1200.5 385.4 L1201.5 391.7 L1202.5 396.7 L1203.5 400.7 L1204.5 404.1 L1205.5 407.1 L1206.5 410.0 L1207.5 412.3 L1208.5 413.7 L1209.5 414.8 L1210.5 415.7 L1211.5 416.2 L1212.5 416.5 L1213.5 416.7 L1214.5 416.8 L1215.5 417.0 L1216.5 417.1 L1217.5 417.2 L1218.5 417.5 L1219.5 417.8 L1220.5 418.3 L1221.5 418.8 L1222.5 419.4 L1223.5 420.2 L1224.5 421.2 L1225.5 422.2 L1226.5 423.3 L1227.5 424.4 L1228.5 425.5 L1229.5 426.7 L1230.5 428.0 L1231.5 429.3 L1232.5 430.5 L1233.5 431.5 L1234.5 432.4 L1235.5 432.8 L1236.5 433.0 L1237.5 432.7 L1238.5 431.9 L1239.5 430.5 L1240.5 428.3 L1241.5 425.4 L1242.5 422.1 L1243.5 418.2 L1244.5 413.3 L1245.5 407.6 L1246.5 400.3 L1247.5 392.5 L1248.5 385.1 L1249.5 377.3 L1250.5 367.4 L1251.5 354.0 L1252.5 339.4 L1253.5 326.1 L1254.5 313.4 L1255.5 301.0 L1256.5 288.9 L1257.5 277.2 L1258.5 266.5 L1259.5 256.0 L1260.5 245.6 L1261.5 235.3 L1262.5 225.2 L1263.5 215.0 L1264.5 204.4 L1265.5 193.7 L1266.5 183.7 L1267.5 174.7 L1268.5 167.3 L1269.5 161.5 L1270.5 156.9 L1271.5 153.1 L1272.5 149.9 L1273.5 146.9 L1274.5 144.1 L1275.5 142.2 L1276.5 140.9 L1277.5 139.8 L1278.5 139.1 L1279.5 138.7 L1280.5 138.5 L1281.5 138.3 L1282.5 138.1 L1283.5 138.0 L1284.5 137.9 L1285.5 137.7 L1286.5 137.4 L1287.5 137.0 L1288.5 136.5 L1289.5 136.0 L1290.5 135.3 L1291.5 134.5 L1292.5 133.5 L1293.5 132.4 L1294.5 131.3 L1295.5 130.2 L1296.5 129.1 L1297.5 127.8 L1298.5 126.5 L1299.5 125.3 L1300.5 124.2 L1301.5 123.2 L1302.5 122.4 L1303.5 122.1 L1304.5 122.1 L1305.5 122.5 L1306.5 123.5 L1307.5 125.1 L1308.5 127.6 L1309.5 130.7 L1310.5 134.1 L1311.5 138.4 L1312.5 143.5 L1313.5 149.7 L1314.5 157.3 L1315.5 165.0 L1316.5 172.4 L1317.5 180.7 L1318.5 191.8 L1319.5 205.9 L1320.5 220.3 L1321.5 233.2 L1322.5 245.8 L1323.5 258.1 L1324.5 270.1 L1325.5 281.4 L1326.5 292.0 L1327.5 302.5 L1328.5 312.9 L1329.5 323.1 L1330.5 333.2 L1331.5 343.5 L1332.5 354.2 L1333.5 364.7 L1334.5 374.5 L1335.5 383.0 L1336.5 389.8 L1337.5 395.1 L1338.5 399.5 L1339.5 403.0 L1340.5 406.1 L1341.5 409.1 L1342.5 411.7 L1343.5 413.3 L1344.5 414.5 L1345.5 415.4 L1346.5 416.0 L1347.5 416.4 L1348.5 416.6 L1349.5 416.8 L1350.5 417.0 L1351.5 417.1 L1352.5 417.2 L1353.5 417.4 L1354.5 417.7 L1355.5 418.1 L1356.5 418.6 L1357.5 419.2 L1358.5 420.0 L1359.5 420.8 L1360.5 421.9 L1361.5 422.9 L1362.5 424.0 L1363.5 425.2 L1364.5 426.3 L1365.5 427.6 L1366.5 428.9 L1367.5 430.1 L1368.5 431.2 L1369.5 432.1 L1370.5 432.7 L1371.5 433.0 L1372.5 432.8 L1373.5 432.2 L1374.5 431.0 L1375.5 429.1 L1376.5 426.4 L1377.5 423.2 L1378.5 419.6 L1379.5 415.0 L1380.5 409.6 L1381.5 402.9 L1382.5 395.1 L1383.5 387.5 L1384.5 380.0" fill="none" stroke="#00ff00" stroke-width="1" stroke-linejoin="round" shape-rendering="crispEdges"/><g stroke="#000" stroke-width="1" fill="none" shape-rendering="crispEdges"><line x1="10" y1="277.5" x2="27" y2="277.5"/><path d="M24 274.5 L27 277.5 L24 280.5"/><line x1="1407" y1="277.5" x2="1424" y2="277.5"/><path d="M1410 274.5 L1407 277.5 L1410 280.5"/></g></svg>
<div class="a" style="left:0;top:57px;width:1430px;height:441px;overflow:hidden">
<div class="t ser" style="left:14px;width:32px;text-align:right;top:-6px;font-size:9.2px;line-height:12px;height:12px;color:#f0f0f0;">49.89</div>
<div class="t ser" style="left:1390px;top:-6px;font-size:9.2px;line-height:12px;height:12px;color:#000;-webkit-text-stroke:.3px #000">49.89</div>
<div class="t ser" style="left:14px;width:32px;text-align:right;top:49px;font-size:9.2px;line-height:12px;height:12px;color:#f0f0f0;">37.41</div>
<div class="t ser" style="left:1390px;top:49px;font-size:9.2px;line-height:12px;height:12px;color:#000;-webkit-text-stroke:.3px #000">37.41</div>
<div class="t ser" style="left:14px;width:32px;text-align:right;top:104px;font-size:9.2px;line-height:12px;height:12px;color:#f0f0f0;">24.94</div>
<div class="t ser" style="left:1390px;top:104px;font-size:9.2px;line-height:12px;height:12px;color:#000;-webkit-text-stroke:.3px #000">24.94</div>
<div class="t ser" style="left:14px;width:32px;text-align:right;top:159px;font-size:9.2px;line-height:12px;height:12px;color:#f0f0f0;">12.47</div>
<div class="t ser" style="left:1390px;top:159px;font-size:9.2px;line-height:12px;height:12px;color:#000;-webkit-text-stroke:.3px #000">12.47</div>
<div class="t ser" style="left:14px;width:32px;text-align:right;top:214px;font-size:9.2px;line-height:12px;height:12px;color:#f0f0f0;">0.00</div>
<div class="t ser" style="left:1390px;top:214px;font-size:9.2px;line-height:12px;height:12px;color:#000;-webkit-text-stroke:.3px #000">0.00</div>
<div class="t ser" style="left:14px;width:32px;text-align:right;top:269px;font-size:9.2px;line-height:12px;height:12px;color:#f0f0f0;">-12.47</div>
<div class="t ser" style="left:1390px;top:269px;font-size:9.2px;line-height:12px;height:12px;color:#000;-webkit-text-stroke:.3px #000">-12.47</div>
<div class="t ser" style="left:14px;width:32px;text-align:right;top:324px;font-size:9.2px;line-height:12px;height:12px;color:#f0f0f0;">-24.94</div>
<div class="t ser" style="left:1390px;top:324px;font-size:9.2px;line-height:12px;height:12px;color:#000;-webkit-text-stroke:.3px #000">-24.94</div>
<div class="t ser" style="left:14px;width:32px;text-align:right;top:379px;font-size:9.2px;line-height:12px;height:12px;color:#f0f0f0;">-37.41</div>
<div class="t ser" style="left:1390px;top:379px;font-size:9.2px;line-height:12px;height:12px;color:#000;-webkit-text-stroke:.3px #000">-37.41</div>
<div class="t ser" style="left:14px;width:32px;text-align:right;top:434px;font-size:9.2px;line-height:12px;height:12px;color:#f0f0f0;">-49.89</div>
<div class="t ser" style="left:1390px;top:434px;font-size:9.2px;line-height:12px;height:12px;color:#000;-webkit-text-stroke:.3px #000">-49.89</div>
</div>
<div class="t" style="left:1325px;top:66px;color:#00e000;font-size:12px;letter-spacing:.3px">D/A On</div>
<div class="t " style="left:9.8px;top:499px;font-size:13.5px;line-height:15px;height:15px;letter-spacing:-0.50px;">0.00 - 8.91mS</div>
<div class="a" style="left:114px;top:502px;width:1302px;height:9px;border:1px solid #d6d6d6;border-bottom-color:#fafafa;background:#e7eaea"></div>
<div class="a" style="left:114px;top:500px;width:6px;height:14px;border:1px solid #9a9a9a;border-radius:2px;background:linear-gradient(90deg,#fdfdfd,#e0e0e0)"></div>
<div class="t " style="left:1421.3px;top:499px;font-size:13.5px;line-height:15px;height:15px;letter-spacing:-0.29px;">%fullscale =54.34</div>
<div class="a" style="left:1430px;top:57px;width:93px;height:350px;overflow:hidden"><div class="a" style="left:-1430px;top:-57px">
<div class="t " style="left:1432.8px;top:61px;font-size:14px;line-height:16px;height:16px;letter-spacing:-0.47px;">Frequency (Hz)</div>
<div class="sunk" style="left:1433px;top:78px;width:100px;height:26px"></div>
<div class="t " style="left:1448.5px;top:83px;font-size:14px;line-height:16px;height:16px;letter-spacing:-1.00px;">9983.51(±0.0</div>
<div class="t " style="left:1432.8px;top:106px;font-size:14px;line-height:16px;height:16px;letter-spacing:-0.47px;">Mean Value (%</div>
<div class="sunk" style="left:1433px;top:123px;width:100px;height:27px"></div>
<div class="t " style="left:1469.1px;top:129px;font-size:14px;line-height:16px;height:16px;letter-spacing:-0.60px;">-0.0018</div>
<div class="t " style="left:1432.8px;top:151px;font-size:14px;line-height:16px;height:16px;letter-spacing:-0.47px;">TRms (%fs)</div>
<div class="sunk" style="left:1433px;top:167px;width:100px;height:26px"></div>
<div class="t " style="left:1468.8px;top:172px;font-size:14px;line-height:16px;height:16px;letter-spacing:-0.77px;">27.8107</div>
<div class="t " style="left:1432.8px;top:192px;font-size:14px;line-height:16px;height:16px;letter-spacing:-0.47px;">Crest factor (%f</div>
<div class="sunk" style="left:1433px;top:211px;width:100px;height:26px"></div>
<div class="t " style="left:1472.0px;top:215px;font-size:14px;line-height:16px;height:16px;letter-spacing:-0.77px;">1.2690</div>
<div class="t " style="left:1432.8px;top:237px;font-size:14px;line-height:16px;height:16px;letter-spacing:-0.47px;">Peak (%fs)</div>
<div class="sunk" style="left:1433px;top:254px;width:100px;height:26px"></div>
<div class="t " style="left:1469.1px;top:259px;font-size:14px;line-height:16px;height:16px;letter-spacing:-0.96px;">35.2921</div>
<div class="t " style="left:1432.8px;top:282px;font-size:14px;line-height:16px;height:16px;letter-spacing:-0.47px;">Peak to peak (%</div>
<div class="sunk" style="left:1433px;top:299px;width:100px;height:26px"></div>
<div class="t " style="left:1469.1px;top:305px;font-size:14px;line-height:16px;height:16px;letter-spacing:-0.86px;">70.7596</div>
<div class="t " style="left:1432.8px;top:325px;font-size:14px;line-height:16px;height:16px;letter-spacing:-0.47px;">Form factor (%f</div>
<div class="sunk" style="left:1433px;top:341px;width:100px;height:26px"></div>
<div class="t " style="left:1455.2px;top:346px;font-size:14px;line-height:16px;height:16px;letter-spacing:-1.00px;">-15813.9682</div>
</div></div>
<div class="cb" style="left:1433px;top:385px;width:16px;height:16px"></div>
<div class="t " style="left:1451.7px;top:385px;font-size:14px;line-height:16px;height:16px;letter-spacing:-0.36px;">Infinite avg</div>
<div class="grp" style="left:1534px;top:59px;width:181px;height:459px"></div><div class="a" style="left:1539px;top:52px;width:47px;height:14px;background:#f0f0f0"></div><div class="t " style="left:1540.7px;top:50px;font-size:14px;line-height:16px;height:16px;letter-spacing:-0.57px;">Ch A(L)</div><div class="t " style="left:1534.6px;top:65px;font-size:14px;line-height:16px;height:16px;letter-spacing:0.03px;">Vpos Trig</div><div class="a" style="left:1547px;top:85px;width:6px;height:389px;border:1px solid #b9bcbc;border-right-color:#f4f4f4;border-bottom-color:#f4f4f4;background:#e7eaea"></div><div class="a" style="left:1545px;top:278px;width:10px;height:5px;border:1px solid #9c9c9c;border-radius:2px;background:linear-gradient(#fdfdfd,#e2e2e2)"></div><div class="a" style="left:1570px;top:85px;width:6px;height:389px;border:1px solid #b9bcbc;border-right-color:#f4f4f4;border-bottom-color:#f4f4f4;background:#e7eaea"></div><div class="a" style="left:1568px;top:85px;width:10px;height:5px;border:1px solid #9c9c9c;border-radius:2px;background:linear-gradient(#fdfdfd,#e2e2e2)"></div><div class="btn " style="left:1603px;top:71px;width:20px;height:16px;line-height:13px;font-size:12.5px">0</div><div class="t " style="left:1650.8px;top:70px;font-size:14px;line-height:16px;height:16px;letter-spacing:0.02px;">ms/d</div><div class="ed" style="left:1602px;top:90px;width:59px;height:20px"></div><div class="t " style="left:1604.4px;top:93px;font-size:12.5px;line-height:14px;height:14px;letter-spacing:-0.33px;">0.0982</div><div class="spin" style="left:1663px;top:90px;height:24px"><i style="top:0;height:12px"></i><i style="top:13px;height:11px"></i><svg style="left:0;top:0" width="19" height="24"><path d="M6 8.2 L9.5 4.2 L13 8.2 Z" fill="#4d6bb8"/><path d="M6 16.7 L13 16.7 L9.5 20.7 Z" fill="#4d6bb8"/></svg></div><div class="t " style="left:1601.8px;top:122px;font-size:14px;line-height:16px;height:16px;letter-spacing:-0.22px;">Zoom</div><div class="t " style="left:1592.0px;top:140px;font-size:11px;line-height:12px;height:12px;letter-spacing:-0.39px;">x</div><div class="ed" style="left:1602px;top:138px;width:59px;height:23px"></div><div class="t " style="left:1604.8px;top:141px;font-size:13px;line-height:15px;height:15px;letter-spacing:-0.46px;">1</div><div class="spin" style="left:1663px;top:138px;height:22px"><i style="top:0;height:11px"></i><i style="top:12px;height:10px"></i><svg style="left:0;top:0" width="19" height="22"><path d="M6 7.7 L9.5 3.7 L13 7.7 Z" fill="#4d6bb8"/><path d="M6 15.2 L13 15.2 L9.5 19.2 Z" fill="#4d6bb8"/></svg></div><div class="cb" style="left:1593px;top:178px;width:16px;height:16px"><svg style="left:1.5px;top:1.5px" width="11" height="11" viewBox="0 0 11 11"><path d="M0.6 5.8 L2.9 4.3 L4.4 6.8 Q6.4 2.6 9.8 -0.2 L11 0.9 Q7.2 4.8 5.1 10.6 L3.3 10.6 Z" fill="#4a5f97"/></svg></div><div class="t " style="left:1611.5px;top:178px;font-size:14px;line-height:16px;height:16px;letter-spacing:0.25px;">Trig</div><div class="cb" style="left:1643px;top:178px;width:16px;height:16px"></div><div class="t " style="left:1661.9px;top:178px;font-size:14px;line-height:16px;height:16px;letter-spacing:-0.26px;">Inv</div><div class="grp" style="left:1592px;top:206px;width:90px;height:120px"></div><div class="a" style="left:1598px;top:200px;width:49px;height:14px;background:#f0f0f0"></div><div class="t " style="left:1599.6px;top:198px;font-size:14px;line-height:16px;height:16px;letter-spacing:0.20px;">Trigger</div><div class="t " style="left:1611.8px;top:216px;font-size:14px;line-height:16px;height:16px;letter-spacing:0.08px;">Slope</div><div class="rb" style="left:1599px;top:234px;width:16px;height:16px"><div class="a" style="left:3px;top:3px;width:8px;height:8px;border-radius:50%;background:radial-gradient(circle at 42% 35%,#8fe0f8 0%,#2a8cc0 30%,#124a6e 70%,#0a2438 100%)"></div></div><div class="t " style="left:1617.9px;top:234px;font-size:14px;line-height:16px;height:16px;letter-spacing:-0.09px;">Positive</div><div class="rb" style="left:1599px;top:254px;width:16px;height:16px"></div><div class="t " style="left:1617.9px;top:254px;font-size:14px;line-height:16px;height:16px;letter-spacing:-0.04px;">Negative</div><div class="t " style="left:1601.2px;top:279px;font-size:9.5px;line-height:10px;height:10px;font-family:'Liberation Serif',serif;letter-spacing:0.03px;-webkit-text-stroke:.3px #000">Delta Th %</div><div class="ed" style="left:1602px;top:293px;width:49px;height:23px"></div><div class="t " style="left:1604.8px;top:297px;font-size:13px;line-height:15px;height:15px;letter-spacing:-0.46px;">8</div><div class="spin" style="left:1652px;top:294px;height:22px"><i style="top:0;height:11px"></i><i style="top:12px;height:10px"></i><svg style="left:0;top:0" width="19" height="22"><path d="M6 7.7 L9.5 3.7 L13 7.7 Z" fill="#4d6bb8"/><path d="M6 15.2 L13 15.2 L9.5 19.2 Z" fill="#4d6bb8"/></svg></div><div class="cb" style="left:1591px;top:331px;width:16px;height:16px"><svg style="left:1.5px;top:1.5px" width="11" height="11" viewBox="0 0 11 11"><path d="M0.6 5.8 L2.9 4.3 L4.4 6.8 Q6.4 2.6 9.8 -0.2 L11 0.9 Q7.2 4.8 5.1 10.6 L3.3 10.6 Z" fill="#4a5f97"/></svg></div><div class="t " style="left:1609.6px;top:329px;font-size:14px;line-height:16px;height:16px;letter-spacing:-0.48px;">D/A</div><div class="cb" style="left:1591px;top:350px;width:16px;height:16px"></div><div class="t " style="left:1609.7px;top:350px;font-size:12.5px;line-height:14px;height:14px;letter-spacing:-0.97px;">DCremoval</div><div class="cb" style="left:1591px;top:368px;width:16px;height:16px"><svg style="left:1.5px;top:1.5px" width="11" height="11" viewBox="0 0 11 11"><path d="M0.6 5.8 L2.9 4.3 L4.4 6.8 Q6.4 2.6 9.8 -0.2 L11 0.9 Q7.2 4.8 5.1 10.6 L3.3 10.6 Z" fill="#4a5f97"/></svg></div><div class="t " style="left:1609.6px;top:368px;font-size:14px;line-height:16px;height:16px;letter-spacing:0.11px;">Values</div><div class="btn " style="left:1544px;top:486px;width:19px;height:18px;line-height:15px;font-size:12.5px">0</div><div class="t " style="left:1657.3px;top:490px;font-size:14px;line-height:16px;height:16px;letter-spacing:-0.46px;">-3.00dB</div><div class="a" style="left:1691px;top:71px;width:14px;height:418px;border:1px solid #b4b4b4;border-radius:2px;background:linear-gradient(90deg,#cdcdcd 0%,#e0e0e0 25%,#dcdcdc 45%,#c4c4c4 55%,#bdbdbd 80%,#a8a8a8 100%)"></div><div class="a" style="left:1692px;top:194px;width:12px;height:294px;background:linear-gradient(90deg,#8ee89a 0%,#b4f0bc 22%,#a4ecae 42%,#2fcf55 50%,#10c040 70%,#0aa835 100%)"></div>
<div class="grp" style="left:1723px;top:59px;width:181px;height:459px"></div><div class="a" style="left:1728px;top:52px;width:47px;height:14px;background:#f0f0f0"></div><div class="t " style="left:1729.7px;top:50px;font-size:14px;line-height:16px;height:16px;letter-spacing:-0.58px;">Ch B(R)</div><div class="t " style="left:1723.3px;top:65px;font-size:14px;line-height:16px;height:16px;color:#a0a0a0;letter-spacing:0.03px;">Vpos Trig</div><div class="a" style="left:1736px;top:85px;width:6px;height:389px;border:1px solid #d2d2d2;border-right-color:#f4f4f4;border-bottom-color:#f4f4f4;background:#e7eaea"></div><div class="a" style="left:1734px;top:278px;width:10px;height:5px;border:1px solid #c4c4c4;border-radius:2px;background:linear-gradient(#fdfdfd,#e2e2e2)"></div><div class="a" style="left:1759px;top:85px;width:6px;height:389px;border:1px solid #d2d2d2;border-right-color:#f4f4f4;border-bottom-color:#f4f4f4;background:#e7eaea"></div><div class="a" style="left:1757px;top:85px;width:10px;height:5px;border:1px solid #c4c4c4;border-radius:2px;background:linear-gradient(#fdfdfd,#e2e2e2)"></div><div class="btn dis" style="left:1792px;top:71px;width:20px;height:16px;line-height:13px;font-size:12.5px">0</div><div class="t " style="left:1839.8px;top:70px;font-size:14px;line-height:16px;height:16px;color:#a0a0a0;letter-spacing:0.02px;">ms/d</div><div class="ed d" style="left:1791px;top:90px;width:59px;height:20px"></div><div class="t " style="left:1793.4px;top:93px;font-size:12.5px;line-height:14px;height:14px;color:#6d6d6d;letter-spacing:-0.33px;">0.8840</div><div class="spin" style="left:1852px;top:90px;height:24px"><i style="top:0;height:12px"></i><i style="top:13px;height:11px"></i><svg style="left:0;top:0" width="19" height="24"><path d="M6 8.2 L9.5 4.2 L13 8.2 Z" fill="#b8b8b8"/><path d="M6 16.7 L13 16.7 L9.5 20.7 Z" fill="#b8b8b8"/></svg></div><div class="t " style="left:1790.8px;top:122px;font-size:14px;line-height:16px;height:16px;color:#a0a0a0;letter-spacing:-0.22px;">Zoom</div><div class="t " style="left:1781.0px;top:140px;font-size:11px;line-height:12px;height:12px;color:#a0a0a0;letter-spacing:-0.39px;">x</div><div class="ed d" style="left:1791px;top:138px;width:59px;height:23px"></div><div class="t " style="left:1793.8px;top:141px;font-size:13px;line-height:15px;height:15px;color:#6d6d6d;letter-spacing:-0.46px;">1</div><div class="spin" style="left:1852px;top:138px;height:22px"><i style="top:0;height:11px"></i><i style="top:12px;height:10px"></i><svg style="left:0;top:0" width="19" height="22"><path d="M6 7.7 L9.5 3.7 L13 7.7 Z" fill="#b8b8b8"/><path d="M6 15.2 L13 15.2 L9.5 19.2 Z" fill="#b8b8b8"/></svg></div><div class="cb d" style="left:1780px;top:178px;width:16px;height:16px"></div><div class="t " style="left:1800.5px;top:178px;font-size:14px;line-height:16px;height:16px;color:#a0a0a0;letter-spacing:0.25px;">Trig</div><div class="cb d" style="left:1832px;top:178px;width:16px;height:16px"></div><div class="t " style="left:1850.9px;top:178px;font-size:14px;line-height:16px;height:16px;color:#a0a0a0;letter-spacing:-0.26px;">Inv</div><div class="grp" style="left:1781px;top:206px;width:90px;height:120px"></div><div class="a" style="left:1787px;top:200px;width:49px;height:14px;background:#f0f0f0"></div><div class="t " style="left:1788.6px;top:198px;font-size:14px;line-height:16px;height:16px;letter-spacing:0.20px;">Trigger</div><div class="t " style="left:1800.8px;top:216px;font-size:14px;line-height:16px;height:16px;color:#a0a0a0;letter-spacing:0.08px;">Slope</div><div class="rb d" style="left:1788px;top:234px;width:16px;height:16px"><div class="a" style="left:3.5px;top:3.5px;width:7px;height:7px;border-radius:50%;background:radial-gradient(circle at 40% 35%,#d8d8d8,#9a9a9a)"></div></div><div class="t " style="left:1806.9px;top:234px;font-size:14px;line-height:16px;height:16px;color:#a0a0a0;letter-spacing:-0.09px;">Positive</div><div class="rb d" style="left:1788px;top:254px;width:16px;height:16px"></div><div class="t " style="left:1806.9px;top:254px;font-size:14px;line-height:16px;height:16px;color:#a0a0a0;letter-spacing:-0.04px;">Negative</div><div class="t " style="left:1790.2px;top:279px;font-size:9.5px;line-height:10px;height:10px;font-family:'Liberation Serif',serif;color:#a0a0a0;letter-spacing:0.03px;-webkit-text-stroke:.3px #a0a0a0">Delta Th %</div><div class="ed d" style="left:1791px;top:293px;width:49px;height:23px"></div><div class="t " style="left:1793.8px;top:297px;font-size:13px;line-height:15px;height:15px;color:#6d6d6d;letter-spacing:-0.46px;">25</div><div class="spin" style="left:1841px;top:294px;height:22px"><i style="top:0;height:11px"></i><i style="top:12px;height:10px"></i><svg style="left:0;top:0" width="19" height="22"><path d="M6 7.7 L9.5 3.7 L13 7.7 Z" fill="#b8b8b8"/><path d="M6 15.2 L13 15.2 L9.5 19.2 Z" fill="#b8b8b8"/></svg></div><div class="cb d" style="left:1780px;top:331px;width:16px;height:16px"></div><div class="t " style="left:1798.6px;top:329px;font-size:14px;line-height:16px;height:16px;color:#a0a0a0;letter-spacing:-0.48px;">D/A</div><div class="cb d" style="left:1780px;top:350px;width:16px;height:16px"></div><div class="t " style="left:1798.7px;top:350px;font-size:12.5px;line-height:14px;height:14px;color:#a0a0a0;letter-spacing:-0.97px;">DCremoval</div><div class="cb d" style="left:1780px;top:368px;width:16px;height:16px"></div><div class="t " style="left:1798.6px;top:368px;font-size:14px;line-height:16px;height:16px;color:#a0a0a0;letter-spacing:-0.08px;">Trig left</div><div class="cb d" style="left:1780px;top:387px;width:16px;height:16px"></div><div class="t " style="left:1798.6px;top:387px;font-size:14px;line-height:16px;height:16px;color:#a0a0a0;letter-spacing:0.11px;">Values</div><div class="btn dis" style="left:1733px;top:486px;width:19px;height:18px;line-height:15px;font-size:12.5px">0</div><div class="t " style="left:1855.3px;top:490px;font-size:14px;line-height:16px;height:16px;color:#a0a0a0;letter-spacing:-0.35px;">-inf dB</div><div class="a" style="left:1880px;top:71px;width:14px;height:418px;border:1px solid #b4b4b4;border-radius:2px;background:linear-gradient(90deg,#cdcdcd 0%,#e0e0e0 25%,#dcdcdc 45%,#c4c4c4 55%,#bdbdbd 80%,#a8a8a8 100%)"></div>
<div class="a" style="left:10px;top:527px;width:1632px;height:479px;background:#808080"></div>
<div class="a" style="left:62px;top:527px;width:1529px;height:458px;background:#000"></div>
<div class="a" style="left:1591px;top:527px;width:51px;height:458px;background:#00ff00"></div>
<svg style="left:0;top:0" width="1920" height="1080" viewBox="0 0 1920 1080" shape-rendering="crispEdges"><g stroke="#585858" stroke-width="1"><line x1="62" y1="570.5" x2="1591" y2="570.5"/><line x1="62" y1="631.5" x2="1591" y2="631.5"/><line x1="62" y1="692.5" x2="1591" y2="692.5"/><line x1="62" y1="752.5" x2="1591" y2="752.5"/><line x1="62" y1="813.5" x2="1591" y2="813.5"/><line x1="62" y1="873.5" x2="1591" y2="873.5"/><line x1="62" y1="934.5" x2="1591" y2="934.5"/></g><g stroke="#2b2b2b" stroke-width="1"><line x1="156.5" y1="527" x2="156.5" y2="985"/><line x1="211.5" y1="527" x2="211.5" y2="985"/><line x1="250.5" y1="527" x2="250.5" y2="985"/><line x1="281.5" y1="527" x2="281.5" y2="985"/><line x1="306.5" y1="527" x2="306.5" y2="985"/><line x1="327.5" y1="527" x2="327.5" y2="985"/><line x1="345.5" y1="527" x2="345.5" y2="985"/><line x1="361.5" y1="527" x2="361.5" y2="985"/><line x1="375.5" y1="527" x2="375.5" y2="985" stroke="#585858"/><line x1="470.5" y1="527" x2="470.5" y2="985"/><line x1="525.5" y1="527" x2="525.5" y2="985"/><line x1="564.5" y1="527" x2="564.5" y2="985"/><line x1="594.5" y1="527" x2="594.5" y2="985"/><line x1="619.5" y1="527" x2="619.5" y2="985"/><line x1="640.5" y1="527" x2="640.5" y2="985"/><line x1="658.5" y1="527" x2="658.5" y2="985"/><line x1="674.5" y1="527" x2="674.5" y2="985"/><line x1="689.5" y1="527" x2="689.5" y2="985" stroke="#585858"/><line x1="783.5" y1="527" x2="783.5" y2="985"/><line x1="838.5" y1="527" x2="838.5" y2="985"/><line x1="877.5" y1="527" x2="877.5" y2="985"/><line x1="908.5" y1="527" x2="908.5" y2="985"/><line x1="933.5" y1="527" x2="933.5" y2="985"/><line x1="954.5" y1="527" x2="954.5" y2="985"/><line x1="972.5" y1="527" x2="972.5" y2="985"/><line x1="988.5" y1="527" x2="988.5" y2="985"/><line x1="1002.5" y1="527" x2="1002.5" y2="985" stroke="#585858"/><line x1="1097.5" y1="527" x2="1097.5" y2="985"/><line x1="1152.5" y1="527" x2="1152.5" y2="985"/><line x1="1191.5" y1="527" x2="1191.5" y2="985"/><line x1="1221.5" y1="527" x2="1221.5" y2="985"/><line x1="1246.5" y1="527" x2="1246.5" y2="985"/><line x1="1267.5" y1="527" x2="1267.5" y2="985"/><line x1="1285.5" y1="527" x2="1285.5" y2="985"/><line x1="1301.5" y1="527" x2="1301.5" y2="985"/><line x1="1316.5" y1="527" x2="1316.5" y2="985" stroke="#585858"/><line x1="1410.5" y1="527" x2="1410.5" y2="985"/><line x1="1465.5" y1="527" x2="1465.5" y2="985"/><line x1="1505.5" y1="527" x2="1505.5" y2="985"/><line x1="1535.5" y1="527" x2="1535.5" y2="985"/><line x1="1560.5" y1="527" x2="1560.5" y2="985"/><line x1="1581.5" y1="527" x2="1581.5" y2="985"/></g><g stroke="#00ff00" stroke-width="1"><line x1="62" y1="985.5" x2="1591" y2="985.5"/><line x1="1221.5" y1="845" x2="1221.5" y2="985"/><line x1="1222.5" y1="917" x2="1222.5" y2="985"/><line x1="1316.5" y1="527" x2="1316.5" y2="985"/><line x1="1371.5" y1="866" x2="1371.5" y2="985"/><line x1="1410.5" y1="932" x2="1410.5" y2="985"/><line x1="1441.5" y1="889" x2="1441.5" y2="985"/><line x1="1465.5" y1="566" x2="1465.5" y2="985"/><line x1="1466.5" y1="785" x2="1466.5" y2="985"/><line x1="1486.5" y1="943" x2="1486.5" y2="985"/><line x1="1535.5" y1="849" x2="1535.5" y2="985"/></g></svg>
<div class="t ser" style="left:30px;width:29px;text-align:right;top:563px;font-size:9.4px;line-height:12px;height:12px;color:#f0f0f0">-18.0</div>
<div class="t ser" style="left:1594px;top:563px;font-size:9.4px;line-height:12px;height:12px;color:#000;-webkit-text-stroke:.3px #000">-18.0</div>
<div class="t ser" style="left:30px;width:29px;text-align:right;top:624px;font-size:9.4px;line-height:12px;height:12px;color:#f0f0f0">-24.0</div>
<div class="t ser" style="left:1594px;top:624px;font-size:9.4px;line-height:12px;height:12px;color:#000;-webkit-text-stroke:.3px #000">-24.0</div>
<div class="t ser" style="left:30px;width:29px;text-align:right;top:685px;font-size:9.4px;line-height:12px;height:12px;color:#f0f0f0">-30.0</div>
<div class="t ser" style="left:1594px;top:685px;font-size:9.4px;line-height:12px;height:12px;color:#000;-webkit-text-stroke:.3px #000">-30.0</div>
<div class="t ser" style="left:30px;width:29px;text-align:right;top:745px;font-size:9.4px;line-height:12px;height:12px;color:#f0f0f0">-36.0</div>
<div class="t ser" style="left:1594px;top:745px;font-size:9.4px;line-height:12px;height:12px;color:#000;-webkit-text-stroke:.3px #000">-36.0</div>
<div class="t ser" style="left:30px;width:29px;text-align:right;top:806px;font-size:9.4px;line-height:12px;height:12px;color:#f0f0f0">-42.0</div>
<div class="t ser" style="left:1594px;top:806px;font-size:9.4px;line-height:12px;height:12px;color:#000;-webkit-text-stroke:.3px #000">-42.0</div>
<div class="t ser" style="left:30px;width:29px;text-align:right;top:866px;font-size:9.4px;line-height:12px;height:12px;color:#f0f0f0">-48.0</div>
<div class="t ser" style="left:1594px;top:866px;font-size:9.4px;line-height:12px;height:12px;color:#000;-webkit-text-stroke:.3px #000">-48.0</div>
<div class="t ser" style="left:30px;width:29px;text-align:right;top:927px;font-size:9.4px;line-height:12px;height:12px;color:#f0f0f0">-54.0</div>
<div class="t ser" style="left:1594px;top:927px;font-size:9.4px;line-height:12px;height:12px;color:#000;-webkit-text-stroke:.3px #000">-54.0</div>
<div class="t " style="left:10.5px;top:527px;font-size:10.5px;line-height:11px;height:11px;font-family:'Liberation Serif',serif;font-weight:bold;color:#0000ff;">dBr</div>
<div class="t " style="left:1621.0px;top:528px;font-size:10.5px;line-height:11px;height:11px;font-family:'Liberation Serif',serif;font-weight:bold;color:#0000ff;">dBr</div>
<div class="t " style="left:1525.9px;top:537px;font-size:12.5px;line-height:14px;height:14px;color:#00e8e8;">0.00000</div>
<div class="t" style="left:136.5px;width:40px;text-align:center;top:987px;font-size:11.5px;line-height:15px;height:15px;letter-spacing:-.2px">2</div>
<div class="t" style="left:191.7px;width:40px;text-align:center;top:987px;font-size:11.5px;line-height:15px;height:15px;letter-spacing:-.2px">3</div>
<div class="t" style="left:230.9px;width:40px;text-align:center;top:987px;font-size:11.5px;line-height:15px;height:15px;letter-spacing:-.2px">4</div>
<div class="t" style="left:261.3px;width:40px;text-align:center;top:987px;font-size:11.5px;line-height:15px;height:15px;letter-spacing:-.2px">5</div>
<div class="t" style="left:286.1px;width:40px;text-align:center;top:987px;font-size:11.5px;line-height:15px;height:15px;letter-spacing:-.2px">6</div>
<div class="t" style="left:307.1px;width:40px;text-align:center;top:987px;font-size:11.5px;line-height:15px;height:15px;letter-spacing:-.2px">7</div>
<div class="t" style="left:325.3px;width:40px;text-align:center;top:987px;font-size:11.5px;line-height:15px;height:15px;letter-spacing:-.2px">8</div>
<div class="t" style="left:355.7px;width:40px;text-align:center;top:987px;font-size:11.5px;line-height:15px;height:15px;letter-spacing:-.2px"><b>10</b></div>
<div class="t" style="left:450.0px;width:40px;text-align:center;top:987px;font-size:11.5px;line-height:15px;height:15px;letter-spacing:-.2px">20</div>
<div class="t" style="left:505.3px;width:40px;text-align:center;top:987px;font-size:11.5px;line-height:15px;height:15px;letter-spacing:-.2px">30</div>
<div class="t" style="left:544.4px;width:40px;text-align:center;top:987px;font-size:11.5px;line-height:15px;height:15px;letter-spacing:-.2px">40</div>
<div class="t" style="left:574.8px;width:40px;text-align:center;top:987px;font-size:11.5px;line-height:15px;height:15px;letter-spacing:-.2px">50</div>
<div class="t" style="left:599.6px;width:40px;text-align:center;top:987px;font-size:11.5px;line-height:15px;height:15px;letter-spacing:-.2px">60</div>
<div class="t" style="left:620.6px;width:40px;text-align:center;top:987px;font-size:11.5px;line-height:15px;height:15px;letter-spacing:-.2px">70</div>
<div class="t" style="left:638.8px;width:40px;text-align:center;top:987px;font-size:11.5px;line-height:15px;height:15px;letter-spacing:-.2px">80</div>
<div class="t" style="left:669.2px;width:40px;text-align:center;top:987px;font-size:11.5px;line-height:15px;height:15px;letter-spacing:-.2px"><b>100</b></div>
<div class="t" style="left:763.6px;width:40px;text-align:center;top:987px;font-size:11.5px;line-height:15px;height:15px;letter-spacing:-.2px">200</div>
<div class="t" style="left:818.8px;width:40px;text-align:center;top:987px;font-size:11.5px;line-height:15px;height:15px;letter-spacing:-.2px">300</div>
<div class="t" style="left:858.0px;width:40px;text-align:center;top:987px;font-size:11.5px;line-height:15px;height:15px;letter-spacing:-.2px">400</div>
<div class="t" style="left:888.4px;width:40px;text-align:center;top:987px;font-size:11.5px;line-height:15px;height:15px;letter-spacing:-.2px">500</div>
<div class="t" style="left:913.2px;width:40px;text-align:center;top:987px;font-size:11.5px;line-height:15px;height:15px;letter-spacing:-.2px">600</div>
<div class="t" style="left:952.4px;width:40px;text-align:center;top:987px;font-size:11.5px;line-height:15px;height:15px;letter-spacing:-.2px">800</div>
<div class="t" style="left:982.8px;width:40px;text-align:center;top:987px;font-size:11.5px;line-height:15px;height:15px;letter-spacing:-.2px"><b>1k</b></div>
<div class="t" style="left:1077.1px;width:40px;text-align:center;top:987px;font-size:11.5px;line-height:15px;height:15px;letter-spacing:-.2px">2k</div>
<div class="t" style="left:1132.4px;width:40px;text-align:center;top:987px;font-size:11.5px;line-height:15px;height:15px;letter-spacing:-.2px">3k</div>
<div class="t" style="left:1171.5px;width:40px;text-align:center;top:987px;font-size:11.5px;line-height:15px;height:15px;letter-spacing:-.2px">4k</div>
<div class="t" style="left:1201.9px;width:40px;text-align:center;top:987px;font-size:11.5px;line-height:15px;height:15px;letter-spacing:-.2px">5k</div>
<div class="t" style="left:1226.7px;width:40px;text-align:center;top:987px;font-size:11.5px;line-height:15px;height:15px;letter-spacing:-.2px">6k</div>
<div class="t" style="left:1247.7px;width:40px;text-align:center;top:987px;font-size:11.5px;line-height:15px;height:15px;letter-spacing:-.2px">7k</div>
<div class="t" style="left:1265.9px;width:40px;text-align:center;top:987px;font-size:11.5px;line-height:15px;height:15px;letter-spacing:-.2px">8k</div>
<div class="t" style="left:1296.3px;width:40px;text-align:center;top:987px;font-size:11.5px;line-height:15px;height:15px;letter-spacing:-.2px"><b>10k</b></div>
<div class="t" style="left:1390.7px;width:40px;text-align:center;top:987px;font-size:11.5px;line-height:15px;height:15px;letter-spacing:-.2px">20k</div>
<div class="t" style="left:1445.9px;width:40px;text-align:center;top:987px;font-size:11.5px;line-height:15px;height:15px;letter-spacing:-.2px">30k</div>
<div class="t" style="left:1485.1px;width:40px;text-align:center;top:987px;font-size:11.5px;line-height:15px;height:15px;letter-spacing:-.2px">40k</div>
<div class="t" style="left:1515.5px;width:40px;text-align:center;top:987px;font-size:11.5px;line-height:15px;height:15px;letter-spacing:-.2px">50k</div>
<div class="t" style="left:1540.3px;width:40px;text-align:center;top:987px;font-size:11.5px;line-height:15px;height:15px;letter-spacing:-.2px">60k</div>
<div class="t " style="left:1626.9px;top:987px;font-size:12px;line-height:14px;height:14px;font-weight:bold;color:#1a1aff;letter-spacing:-0.42px;">Hz</div>
<div class="a" style="left:1649px;top:547px;width:266px;height:406px;background:#f0f0f0;border:1px solid #898c95"></div>
<div class="a" style="left:1707px;top:526px;width:53px;height:22px;border:1px solid #898c95;border-bottom:none;background:linear-gradient(#f2f2f2 0%,#ebebeb 48%,#dddddd 52%,#cfcfcf 100%);box-shadow:inset 1px 1px 0 #fcfcfc,inset -1px 0 0 #fcfcfc;overflow:hidden"></div>
<div class="t " style="left:1710.8px;top:529px;font-size:14px;line-height:16px;height:16px;letter-spacing:-0.12px;">More</div>
<div class="a" style="left:1759px;top:526px;width:55px;height:22px;border:1px solid #898c95;border-bottom:none;background:linear-gradient(#f2f2f2 0%,#ebebeb 48%,#dddddd 52%,#cfcfcf 100%);box-shadow:inset 1px 1px 0 #fcfcfc,inset -1px 0 0 #fcfcfc;overflow:hidden"></div>
<div class="t " style="left:1764.3px;top:529px;font-size:14px;line-height:16px;height:16px;letter-spacing:0.05px;">Cepst</div>
<div class="a" style="left:1813px;top:526px;width:55px;height:22px;border:1px solid #898c95;border-bottom:none;background:linear-gradient(#f2f2f2 0%,#ebebeb 48%,#dddddd 52%,#cfcfcf 100%);box-shadow:inset 1px 1px 0 #fcfcfc,inset -1px 0 0 #fcfcfc;overflow:hidden"></div>
<div class="t " style="left:1818.5px;top:529px;font-size:14px;line-height:16px;height:16px;letter-spacing:0.24px;">THD</div>
<div class="a" style="left:1867px;top:526px;width:15px;height:22px;border:1px solid #898c95;border-bottom:none;background:linear-gradient(#f2f2f2 0%,#ebebeb 48%,#dddddd 52%,#cfcfcf 100%);box-shadow:inset 1px 1px 0 #fcfcfc,inset -1px 0 0 #fcfcfc;overflow:hidden"></div>
<div class="a" style="left:1868px;top:528px;width:10px;height:19px;overflow:hidden"><div class="t" style="left:3.6px;top:0;font-size:14px;line-height:16px">U</div></div>
<div class="a" style="left:1649px;top:524px;width:58px;height:24px;border:1px solid #898c95;border-bottom:none;background:#fff"></div>
<div class="t " style="left:1657.0px;top:527px;font-size:14px;line-height:16px;height:16px;letter-spacing:-0.31px;">Main</div>
<div class="a" style="left:1878px;top:525px;width:19px;height:20px;border:1px solid #b8b8b8;background:linear-gradient(#f4f4f4,#dcdcdc);box-shadow:inset 0 0 0 1px #fafafa"></div>
<svg style="left:1878px;top:525px" width="19" height="20"><path d="M6.5 9.5 L11 6 L11 13 Z" fill="#3a5fb8"/></svg>
<div class="a" style="left:1897px;top:525px;width:19px;height:20px;border:1px solid #b8b8b8;background:linear-gradient(#f4f4f4,#dcdcdc);box-shadow:inset 0 0 0 1px #fafafa"></div>
<svg style="left:1897px;top:525px" width="19" height="20"><path d="M12.5 9.5 L8 6 L8 13 Z" fill="#3a5fb8"/></svg>
<div class="grp" style="left:1653px;top:551px;width:139px;height:184px"></div>
<div class="cb" style="left:1663px;top:556px;width:16px;height:16px"></div>
<div class="t " style="left:1681.6px;top:557px;font-size:14px;line-height:16px;height:16px;letter-spacing:-0.31px;">Stay on top</div>
<div class="cb" style="left:1663px;top:575px;width:16px;height:16px"></div>
<div class="t " style="left:1681.6px;top:575px;font-size:14px;line-height:16px;height:16px;letter-spacing:-0.18px;">Volt meter</div>
<div class="cb" style="left:1663px;top:595px;width:16px;height:16px"><svg style="left:1.5px;top:1.5px" width="11" height="11" viewBox="0 0 11 11"><path d="M0.6 5.8 L2.9 4.3 L4.4 6.8 Q6.4 2.6 9.8 -0.2 L11 0.9 Q7.2 4.8 5.1 10.6 L3.3 10.6 Z" fill="#4a5f97"/></svg></div>
<div class="t " style="left:1681.6px;top:595px;font-size:14px;line-height:16px;height:16px;letter-spacing:-0.30px;">Freq. meter</div>
<div class="cb" style="left:1663px;top:615px;width:16px;height:16px"></div>
<div class="t " style="left:1681.6px;top:615px;font-size:14px;line-height:16px;height:16px;letter-spacing:-0.05px;">Wave Gen./Rec</div>
<div class="cb" style="left:1663px;top:636px;width:16px;height:16px"></div>
<div class="t " style="left:1681.6px;top:635px;font-size:14px;line-height:16px;height:16px;letter-spacing:-0.08px;">Phase</div>
<div class="cb" style="left:1663px;top:654px;width:16px;height:16px"></div>
<div class="t " style="left:1681.6px;top:653px;font-size:14px;line-height:16px;height:16px;letter-spacing:-0.07px;">THD view</div>
<div class="cb" style="left:1663px;top:674px;width:16px;height:16px"></div>
<div class="t " style="left:1681.6px;top:674px;font-size:14px;line-height:16px;height:16px;letter-spacing:-0.10px;">THD+Noise view</div>
<div class="cb" style="left:1663px;top:695px;width:16px;height:16px"></div>
<div class="t " style="left:1681.6px;top:694px;font-size:14px;line-height:16px;height:16px;letter-spacing:-0.40px;">ZRLC meter</div>
<div class="cb" style="left:1663px;top:713px;width:16px;height:16px"></div>
<div class="t " style="left:1681.6px;top:713px;font-size:14px;line-height:16px;height:16px;letter-spacing:-0.12px;">Fast Rec./Play</div>
<div class="btn" style="left:1802px;top:558px;width:107px;height:19px;line-height:16px;font-size:14px;letter-spacing:-0.5px">Capture scope</div>
<div class="btn" style="left:1802px;top:582px;width:107px;height:18px;line-height:15px;font-size:14px;letter-spacing:-0.75px">Capture spectrum</div>
<div class="btn" style="left:1800px;top:605px;width:71px;height:18px;line-height:15px;font-size:14px;letter-spacing:-0.5px">WaveOn</div>
<div class="btn" style="left:1876px;top:605px;width:33px;height:18px;line-height:15px;font-size:14px;letter-spacing:-0.5px">Info</div>
<div class="grp" style="left:1801px;top:631px;width:109px;height:104px"></div>
<div class="t " style="left:1821.2px;top:645px;font-size:14px;line-height:16px;height:16px;letter-spacing:-0.05px;">wait</div>
<div class="t " style="left:1821.3px;top:673px;font-size:14px;line-height:16px;height:16px;letter-spacing:0.02px;">req.</div>
<div class="t " style="left:1821.8px;top:704px;font-size:14px;line-height:16px;height:16px;letter-spacing:-0.11px;">used</div>
<div class="ed" style="left:1860px;top:642px;width:41px;height:23px"></div>
<div class="t " style="left:1862.6px;top:645px;font-size:14px;line-height:16px;height:16px;letter-spacing:-0.90px;">171</div>
<div class="ed" style="left:1860px;top:671px;width:41px;height:23px"></div>
<div class="t " style="left:1862.6px;top:673px;font-size:14px;line-height:16px;height:16px;letter-spacing:-0.90px;">-4</div>
<div class="ed" style="left:1860px;top:699px;width:41px;height:23px"></div>
<div class="t " style="left:1862.6px;top:702px;font-size:14px;line-height:16px;height:16px;letter-spacing:-0.90px;">63</div>
<div class="grp" style="left:1653px;top:744px;width:139px;height:188px"></div>
<div class="a" style="left:1659px;top:738px;width:47px;height:14px;background:#f0f0f0"></div>
<div class="t " style="left:1660.2px;top:736px;font-size:14px;line-height:16px;height:16px;letter-spacing:-0.34px;">Y - axis</div>
<div class="a" style="left:1676px;top:762px;width:8px;height:137px;border:1px solid #c6c9c9;border-right-color:#eee;background:#e7eaea"></div>
<div class="a" style="left:1668px;top:765px;width:4px;height:1px;background:#c4c4c4"></div><div class="a" style="left:1689px;top:765px;width:4px;height:1px;background:#c4c4c4"></div>
<div class="a" style="left:1668px;top:782px;width:4px;height:1px;background:#c4c4c4"></div><div class="a" style="left:1689px;top:782px;width:4px;height:1px;background:#c4c4c4"></div>
<div class="a" style="left:1668px;top:800px;width:4px;height:1px;background:#c4c4c4"></div><div class="a" style="left:1689px;top:800px;width:4px;height:1px;background:#c4c4c4"></div>
<div class="a" style="left:1668px;top:817px;width:4px;height:1px;background:#c4c4c4"></div><div class="a" style="left:1689px;top:817px;width:4px;height:1px;background:#c4c4c4"></div>
<div class="a" style="left:1668px;top:835px;width:4px;height:1px;background:#c4c4c4"></div><div class="a" style="left:1689px;top:835px;width:4px;height:1px;background:#c4c4c4"></div>
<div class="a" style="left:1668px;top:852px;width:4px;height:1px;background:#c4c4c4"></div><div class="a" style="left:1689px;top:852px;width:4px;height:1px;background:#c4c4c4"></div>
<div class="a" style="left:1668px;top:870px;width:4px;height:1px;background:#c4c4c4"></div><div class="a" style="left:1689px;top:870px;width:4px;height:1px;background:#c4c4c4"></div>
<div class="a" style="left:1668px;top:887px;width:4px;height:1px;background:#c4c4c4"></div><div class="a" style="left:1689px;top:887px;width:4px;height:1px;background:#c4c4c4"></div>
<div class="a" style="left:1668px;top:895px;width:4px;height:1px;background:#c4c4c4"></div><div class="a" style="left:1689px;top:895px;width:4px;height:1px;background:#c4c4c4"></div>
<div class="a" style="left:1673px;top:849px;width:14px;height:6px;border:1px solid #8a8a8a;border-radius:2px;background:linear-gradient(#fdfdfd,#dcdcdc)"></div>
<div class="btn" style="left:1664px;top:907px;width:38px;height:16px;line-height:13px;font-size:14px;letter-spacing:-0.5px">Auto</div>
<div class="cb" style="left:1722px;top:752px;width:16px;height:16px"><svg style="left:1.5px;top:1.5px" width="11" height="11" viewBox="0 0 11 11"><path d="M0.6 5.8 L2.9 4.3 L4.4 6.8 Q6.4 2.6 9.8 -0.2 L11 0.9 Q7.2 4.8 5.1 10.6 L3.3 10.6 Z" fill="#4a5f97"/></svg></div>
<div class="t " style="left:1740.9px;top:752px;font-size:14px;line-height:16px;height:16px;letter-spacing:-0.02px;">Log</div>
<div class="cb" style="left:1722px;top:775px;width:16px;height:16px"></div>
<div class="t " style="left:1740.9px;top:775px;font-size:14px;line-height:16px;height:16px;letter-spacing:0.08px;">Hold</div>
<div class="cb d" style="left:1722px;top:798px;width:16px;height:16px"><svg style="left:1.5px;top:1.5px" width="11" height="11" viewBox="0 0 11 11"><path d="M0.6 5.8 L2.9 4.3 L4.4 6.8 Q6.4 2.6 9.8 -0.2 L11 0.9 Q7.2 4.8 5.1 10.6 L3.3 10.6 Z" fill="#b4b8c0"/></svg></div>
<div class="t " style="left:1740.9px;top:798px;font-size:14px;line-height:16px;height:16px;color:#a0a0a0;letter-spacing:-0.23px;">Lines</div>
<div class="cb" style="left:1722px;top:819px;width:16px;height:16px"></div>
<div class="t " style="left:1740.9px;top:819px;font-size:14px;line-height:16px;height:16px;letter-spacing:-0.54px;">Info</div>
<div class="t " style="left:1711.7px;top:837px;font-size:14px;line-height:16px;height:16px;letter-spacing:0.09px;">Average</div>
<div class="combo" style="left:1712px;top:855px;width:70px;height:23px"></div><div class="t " style="left:1716.3px;top:859px;font-size:14px;line-height:16px;height:16px;letter-spacing:-0.49px;">1</div><div class="arr" style="left:1766.5px;top:864.5px;border-top-color:#000"></div>
<div class="t " style="left:1711.7px;top:880px;font-size:14px;line-height:16px;height:16px;letter-spacing:-0.10px;">Step</div>
<div class="combo" style="left:1712px;top:899px;width:70px;height:22px"></div><div class="t " style="left:1716.3px;top:902px;font-size:14px;line-height:16px;height:16px;letter-spacing:-0.49px;">6 dB</div><div class="arr" style="left:1766.5px;top:908.5px;border-top-color:#000"></div>
<div class="grp" style="left:1801px;top:744px;width:109px;height:122px"></div>
<div class="a" style="left:1807px;top:738px;width:46px;height:14px;background:#f0f0f0"></div>
<div class="t " style="left:1808.0px;top:736px;font-size:14px;line-height:16px;height:16px;letter-spacing:-0.45px;">X - axis</div>
<div class="cb" style="left:1811px;top:755px;width:16px;height:16px"><svg style="left:1.5px;top:1.5px" width="11" height="11" viewBox="0 0 11 11"><path d="M0.6 5.8 L2.9 4.3 L4.4 6.8 Q6.4 2.6 9.8 -0.2 L11 0.9 Q7.2 4.8 5.1 10.6 L3.3 10.6 Z" fill="#4a5f97"/></svg></div>
<div class="t " style="left:1829.5px;top:755px;font-size:14px;line-height:16px;height:16px;letter-spacing:0.08px;">Log</div>
<div class="cb" style="left:1866px;top:755px;width:16px;height:16px"></div>
<div class="t " style="left:1884.8px;top:755px;font-size:14px;line-height:16px;height:16px;letter-spacing:-0.35px;">3D</div>
<div class="cb d" style="left:1811px;top:777px;width:16px;height:16px"></div>
<div class="t " style="left:1829.5px;top:777px;font-size:14px;line-height:16px;height:16px;color:#a0a0a0;letter-spacing:-0.43px;">true X</div>
<div class="combo" style="left:1811px;top:796px;width:90px;height:23px"></div><div class="t " style="left:1815.3px;top:800px;font-size:14px;line-height:16px;height:16px;letter-spacing:-0.49px;">Fit screen</div><div class="arr" style="left:1885.5px;top:805.5px;border-top-color:#000"></div>
<div class="combo d" style="left:1811px;top:830px;width:90px;height:23px"></div><div class="t " style="left:1815.3px;top:834px;font-size:14px;line-height:16px;height:16px;color:#838383;letter-spacing:-0.49px;">1/1</div><div class="arr" style="left:1885.5px;top:839.5px;border-top-color:#8a8a8a"></div>
<div class="grp" style="left:1801px;top:878px;width:109px;height:51px"></div>
<div class="a" style="left:1807px;top:871px;width:68px;height:14px;background:#f0f0f0"></div>
<div class="t " style="left:1809.0px;top:870px;font-size:14px;line-height:16px;height:16px;letter-spacing:-0.43px;">Channel(s)</div>
<div class="combo" style="left:1811px;top:893px;width:90px;height:23px"></div><div class="t " style="left:1815.3px;top:897px;font-size:14px;line-height:16px;height:16px;letter-spacing:-0.49px;">A</div><div class="arr" style="left:1885.5px;top:902.5px;border-top-color:#000"></div>
<div class="a" style="left:77px;top:519px;width:762px;height:178px;border:1px solid #1c1c1c;border-radius:1px;box-shadow:2px 3px 6px rgba(0,0,0,.35);background:linear-gradient(180deg,#e4e4e4 0px,#e8e8e8 2px,#b0b0b0 5px,#6a6a6a 8px,#3e3e3e 11px,#3a3a3a 16px,#3c3c3c 27px,#2c2c2c 29px,#262626 100%)"></div>
<div class="a" style="left:78px;top:520px;width:760px;height:28px;overflow:hidden"><div class="a" style="left:-8px;top:3px;width:376px;height:26px;border-radius:10px;background:rgba(255,255,255,.34);filter:blur(6px)"></div><div class="a" style="left:4px;top:7px;width:356px;height:16px;border-radius:8px;background:rgba(255,255,255,.16);filter:blur(3px)"></div></div>
<div class="a" style="left:78px;top:520px;width:760px;height:176px;border:1px solid rgba(255,255,255,.75);border-bottom-color:rgba(255,255,255,.35);border-right-color:rgba(255,255,255,.45)"></div>
<div class="a" style="left:79px;top:548px;width:4px;height:142px;background:linear-gradient(180deg,#4a4a4a,#6a6a6a 40%,#5a5a5a)"></div>
<div class="t " style="left:86.2px;top:526px;font-size:15px;line-height:17px;height:17px;color:#0a0a18;letter-spacing:-0.03px;text-shadow:0 0 5px rgba(255,255,255,.55),0 0 9px rgba(255,255,255,.4)">Multifunction Counter [ Hz ] - ( spectrum peak value )</div>
<div class="a" style="left:812px;top:525px;width:20px;height:20px;border:1px solid #9c9c9c;border-radius:3px;background:linear-gradient(#4a4a4a,#343434 50%,#2c2c2c)"></div>
<svg style="left:812px;top:525px" width="20" height="20" viewBox="0 0 20 20"><path d="M4.2 5 L8 5 L10 7.4 L12 5 L15.8 5 L12 10.4 L15.8 15.8 L12 15.8 L10 13.2 L8 15.8 L4.2 15.8 L8 10.4 Z" fill="#fff" stroke="#2a2a3a" stroke-width=".9"/></svg>
<div class="a" style="left:83px;top:547px;width:750px;height:144px;border:1px solid #1a1a1a;background:#f0f0f0"></div>
<div class="a" style="left:84px;top:548px;width:748px;height:142px;border:1px solid #d8d8d8;border-bottom-color:#fff"></div>
<div class="a" style="left:195px;top:549px;width:613px;height:115px;background:#000"></div>
<div class="a" style="left:196px;top:550px;width:21px;height:21px;background:#ff0000"></div>
<div class="t" style="left:324.5px;top:539px;font-size:119px;line-height:134px;height:134px;color:#00ff00;letter-spacing:-2.2px;-webkit-text-stroke:0.5px #00ff00">9983.8</div>
<div class="a" style="left:808px;top:549px;width:23px;height:115px;border:1px solid #b0b0b0;background:linear-gradient(90deg,#ffffff 0%,#e0e0e0 12%,#dadada 58%,#c9c9c9 62%,#c4c4c4 88%,#a8a8a8 100%)"></div>
<div class="a" style="left:809px;top:585px;width:21px;height:79px;background:linear-gradient(90deg,#c8f8cc 0%,#a6eeae 20%,#96ea9e 42%,#1fc94a 46%,#14c240 70%,#18d848 90%,#30e860 100%)"></div>
<div class="t " style="left:91.8px;top:551px;font-size:14px;line-height:16px;height:16px;letter-spacing:-0.31px;">Resolut.</div>
<div class="cb d" style="left:150px;top:551px;width:16px;height:16px"></div>
<div class="t " style="left:168.8px;top:551px;font-size:14px;line-height:16px;height:16px;color:#a0a0a0;letter-spacing:0.09px;">Hi</div>
<div class="combo" style="left:92px;top:571px;width:96px;height:24px"></div>
<div class="t " style="left:96.3px;top:575px;font-size:14px;line-height:16px;height:16px;letter-spacing:-0.79px;">4.6 Hz</div>
<div class="arr" style="left:172.5px;top:581px;border-left-width:5px;border-right-width:5px;border-top-width:5.5px"></div>
<div class="t " style="left:91.8px;top:602px;font-size:14px;line-height:16px;height:16px;letter-spacing:-0.22px;">%Power of peak</div>
<div class="a" style="left:92px;top:618px;width:96px;height:24px;background:#fff;border:1px solid;border-color:#abadb3 #dbdfe6 #e3e9ef #e2e3ea"></div>
<div class="t " style="left:94.8px;top:621px;font-size:14px;line-height:16px;height:16px;letter-spacing:-0.73px;">10.00</div>
<div class="rb" style="left:86px;top:667px;width:16px;height:16px"><div class="a" style="left:3px;top:3px;width:8px;height:8px;border-radius:50%;background:radial-gradient(circle at 42% 35%,#8fe0f8 0%,#2a8cc0 30%,#124a6e 70%,#0a2438 100%)"></div></div>
<div class="t " style="left:104.8px;top:667px;font-size:14px;line-height:16px;height:16px;letter-spacing:-0.25px;">Frequency meter</div>
<div class="rb" style="left:214px;top:667px;width:16px;height:16px"></div>
<div class="t " style="left:232.3px;top:667px;font-size:14px;line-height:16px;height:16px;letter-spacing:-0.08px;">Periodimeter</div>
<div class="rb" style="left:322px;top:667px;width:16px;height:16px"></div>
<div class="t " style="left:341.0px;top:667px;font-size:14px;line-height:16px;height:16px;letter-spacing:-0.44px;">Counter</div>
<div class="cb" style="left:421px;top:667px;width:16px;height:16px"></div>
<div class="t " style="left:439.8px;top:667px;font-size:14px;line-height:16px;height:16px;letter-spacing:0.08px;">Hold</div>
<div class="cb" style="left:491px;top:667px;width:16px;height:16px"></div>
<div class="t " style="left:509.8px;top:667px;font-size:14px;line-height:16px;height:16px;letter-spacing:-0.06px;">UC</div>
<div class="cb" style="left:551px;top:667px;width:16px;height:16px"></div>
<div class="t " style="left:569.8px;top:667px;font-size:14px;line-height:16px;height:16px;letter-spacing:-0.45px;">Statistic UC (A)</div>
<div class="btn" style="left:757px;top:666px;width:68px;height:21px;line-height:18px;font-weight:bold;font-size:13.5px">HELP</div>
<div class="a" style="left:0;top:1006px;width:1920px;height:6px;background:#f0f0f0"></div>
<div class="a" style="left:0;top:1011px;width:1920px;height:1px;background:#d4d0d0"></div>
<div class="a" style="left:0;top:1012px;width:1920px;height:21px;background:#f0eceb"></div>
<div class="t " style="left:3.8px;top:1014px;font-size:14.5px;line-height:16px;height:16px;font-style:italic;letter-spacing:0.08px;">[Points = 32768]</div>
<div class="t " style="left:119.8px;top:1014px;font-size:14.5px;line-height:16px;height:16px;font-style:italic;letter-spacing:0.07px;">[Sampling = 150000Hz]</div>
<div class="t " style="left:281.3px;top:1014px;font-size:14.5px;line-height:16px;height:16px;font-style:italic;letter-spacing:0.16px;">[Smoothing = Hanning]</div>
<div class="t " style="left:441.3px;top:1014px;font-size:14.5px;line-height:16px;height:16px;font-style:italic;letter-spacing:0.07px;">[Ini = C:\Program Files (x86)\Visual Analyser\VA.ini]</div>
<div class="t " style="left:783.3px;top:1014px;font-size:14.5px;line-height:16px;height:16px;font-style:italic;letter-spacing:-0.58px;">[UID = 9E82FBF60AF4DDFEFD6F22568A4EE6CE]</div>
<div class="a" style="left:0;top:1032px;width:1920px;height:48px;background:linear-gradient(180deg,rgba(255,255,255,.22) 0px,rgba(255,255,255,.08) 2px,rgba(255,255,255,0) 14px,rgba(0,0,0,.12) 100%),radial-gradient(ellipse 45px 14px at 690px 16px,rgba(120,90,50,.38),rgba(120,90,50,0)),radial-gradient(ellipse 60px 14px at 960px 22px,rgba(110,85,50,.30),rgba(110,85,50,0)),radial-gradient(ellipse 40px 12px at 790px 10px,rgba(20,16,16,.35),rgba(20,16,16,0)),radial-gradient(ellipse 75px 20px at 1235px 26px,rgba(130,92,40,.45),rgba(130,92,40,0)),radial-gradient(ellipse 50px 14px at 1190px 40px,rgba(25,20,20,.35),rgba(25,20,20,0)),radial-gradient(ellipse 60px 20px at 70px 40px,rgba(20,18,26,.35),rgba(20,18,26,0)),linear-gradient(112deg,rgba(255,255,255,0) 30.2%,rgba(255,255,255,.09) 31.2%,rgba(255,255,255,.02) 32.6%,rgba(255,255,255,0) 33%),linear-gradient(112deg,rgba(255,255,255,0) 55%,rgba(255,255,255,.06) 56%,rgba(255,255,255,0) 57.5%),linear-gradient(90deg,#4d4c62 0px,#3e3d4e 60px,#4a4a60 120px,#565468 200px,#6a6478 260px,#4a4458 285px,#4a4248 420px,#4e464c 480px,#5c5458 560px,#625a60 620px,#423a3c 680px,#3a3436 800px,#40383a 900px,#3e3a40 1000px,#56525c 1060px,#5a5560 1140px,#443a36 1200px,#463c34 1300px,#3c3a42 1360px,#504a56 1420px,#746a7a 1480px,#857b8c 1560px,#7a7082 1620px,#5c5262 1680px,#3e3642 1740px,#342e38 1800px,#3a3440 1900px,#4a4450 1920px)"></div>
<div class="a" style="left:0;top:1032px;width:1920px;height:1px;background:#1e1e28"></div>
<div class="a" style="left:0;top:1033px;width:1920px;height:1px;background:rgba(255,255,255,.35)"></div>
<div class="a" style="left:282px;top:1033px;width:67px;height:48px;border:1px solid rgba(30,25,40,.75);border-radius:3px;box-shadow:inset 0 0 0 1px rgba(255,255,255,.35);background:linear-gradient(135deg,rgba(190,180,205,.55) 0%,rgba(150,138,165,.55) 45%,rgba(120,108,135,.55) 55%,rgba(140,128,155,.6) 100%)"></div>
<div class="a" style="left:352px;top:1033px;width:67px;height:48px;border:1px solid rgba(30,25,40,.75);border-radius:3px;box-shadow:inset 0 0 0 1px rgba(255,255,255,.6);background:linear-gradient(100deg,rgba(240,236,244,.85) 0%,rgba(200,192,208,.85) 35%,rgba(170,160,180,.85) 60%,rgba(190,182,198,.85) 100%)"></div>
<svg style="left:10px;top:1033px" width="46" height="46" viewBox="0 0 46 46"><defs><radialGradient id="orb" cx="50%" cy="38%" r="65%"><stop offset="0" stop-color="#6fb4e0"/><stop offset=".45" stop-color="#2f7fbf"/><stop offset=".8" stop-color="#0e3f78"/><stop offset="1" stop-color="#0a2a55"/></radialGradient><radialGradient id="orb2" cx="50%" cy="100%" r="55%"><stop offset="0" stop-color="#40e0ff" stop-opacity=".95"/><stop offset="1" stop-color="#40e0ff" stop-opacity="0"/></radialGradient><linearGradient id="orb3" x1="0" y1="0" x2="0" y2="1"><stop offset="0" stop-color="#fff" stop-opacity=".65"/><stop offset="1" stop-color="#fff" stop-opacity=".08"/></linearGradient></defs><circle cx="23" cy="23" r="21.5" fill="#0c2c54" stroke="#a8c4dc" stroke-width="1"/><circle cx="23" cy="23" r="20" fill="url(#orb)"/><circle cx="23" cy="23" r="20" fill="url(#orb2)"/><path d="M4.5 19 A19 19 0 0 1 41.5 19 Q23 26 4.5 19 Z" fill="url(#orb3)"/><path d="M14.5 11.5 Q19 9.5 23 12.5 L21 21 Q17 18.5 12 20.5 Z" fill="#e8622a"/><path d="M25 13.2 Q29.5 15.5 34.5 13 L32 22 Q27.5 24 23 21.6 Z" fill="#7ab83a"/><path d="M11.5 22.5 Q16.5 20.5 20.5 23 L18.3 32 Q14 29.5 9 31.5 Z" fill="#3a9be0"/><path d="M22.5 23.8 Q27 26.2 31.5 24 L29.2 33.2 Q24.5 35.5 20.2 33 Z" fill="#f8c030"/></svg>
<svg style="left:85px;top:1036px" width="41" height="40" viewBox="0 0 41 40"><path d="M5 3 Q5 1.5 6.5 1.5 L17 1.5 L19 4 L19 12 L5 12 Z" fill="#f1dc8a" stroke="#d9bf62" stroke-width=".8"/><rect x="6.5" y="2.6" width="2" height="2.6" fill="#2e9e3a"/><rect x="9" y="2.8" width="7" height="2.2" fill="#fff"/><path d="M13 6 Q13 4.5 14.5 4.5 L25 4.5 L27 7 L27 14 L13 14 Z" fill="#f1dc8a" stroke="#d9bf62" stroke-width=".8"/><rect x="14.5" y="5.6" width="2" height="2.6" fill="#e03a2a"/><rect x="17" y="5.8" width="7" height="2.2" fill="#fff"/><path d="M23 8.5 Q23 7 24.5 7 L37 7 Q38.5 7 38.5 8.5 L38.5 14 L23 14 Z" fill="#f1dc8a" stroke="#d9bf62" stroke-width=".8"/><rect x="24.5" y="8.3" width="2" height="2.6" fill="#2a6ee0"/><rect x="27" y="8.5" width="9" height="2.2" fill="#fff"/><path d="M1 12.5 Q1 11 2.5 11 L37.5 11 Q39 11 39 12.5 L39 34.5 Q39 36 37.5 36 L2.5 36 Q1 36 1 34.5 Z" fill="#f3de8c" stroke="#d8bd5e" stroke-width=".8"/><path d="M1.5 12 L38.5 12 L38.5 22 Q20 20 1.5 30 Z" fill="#f8eaa8" opacity=".7"/><path d="M5 26 Q5 23.5 7.5 23.5 L31.5 23.5 Q34 23.5 34 26 L34 38.5 L26.5 38.5 L26.5 32 L13 32 L13 38.5 L5 38.5 Z" fill="#6cc0ea" stroke="#4a9acb" stroke-width=".8"/><path d="M6 26 Q6 24.5 7.5 24.5 L31.5 24.5 Q33 24.5 33 26 L33 29 Q20 26 6 31 Z" fill="#b6e4f8" opacity=".85"/></svg>
<svg style="left:155px;top:1040px" width="36" height="35" viewBox="0 0 36 35"><defs><radialGradient id="wmp" cx="45%" cy="40%" r="60%"><stop offset="0" stop-color="#ffb04a"/><stop offset="1" stop-color="#f07818"/></radialGradient></defs><path d="M28 3 L33.5 5 L33.5 31 L28 33 Z" fill="#6eb4dc"/><path d="M25 2.5 L30.5 4 L30.5 32 L25 33.5 Z" fill="#8ac8ea"/><path d="M1.5 3 L27.5 1.5 L27.5 34 L1.5 31.5 Z" fill="#7cbfe6" stroke="#5a9fcc" stroke-width=".8"/><path d="M2.5 4 L26.5 2.6 L26.5 16 Q14 14 2.5 20 Z" fill="#a8d8f2" opacity=".8"/><circle cx="14.5" cy="17.5" r="10.3" fill="url(#wmp)"/><path d="M10.5 10.5 L22 17.5 L10.5 24.5 Z" fill="#fff"/></svg>
<svg style="left:225px;top:1036px" width="38" height="32" viewBox="0 0 38 32"><defs><linearGradient id="wg" x1="0" y1="0" x2="1" y2="1"><stop offset="0" stop-color="#4a7fb0"/><stop offset="1" stop-color="#6fbf88"/></linearGradient><linearGradient id="wg2" x1="0" y1="0" x2="0" y2="1"><stop offset="0" stop-color="#4a7fc0"/><stop offset="1" stop-color="#7ac080"/></linearGradient></defs><rect x="1" y="1.5" width="36" height="29" fill="#f4f4f6" stroke="#c8c8d0" stroke-width="1"/><rect x="1.5" y="2" width="35" height="3" fill="#dfe3ea"/><rect x="4.5" y="6.5" width="14" height="19" fill="url(#wg)"/><g stroke="#d4d4d8" stroke-width="1"><line x1="21" y1="8.5" x2="28" y2="8.5"/><line x1="21" y1="11.5" x2="28" y2="11.5"/><line x1="21" y1="14.5" x2="28" y2="14.5"/><line x1="21" y1="17.5" x2="28" y2="17.5"/><line x1="21" y1="21.5" x2="28" y2="21.5"/><line x1="21" y1="24.5" x2="28" y2="24.5"/></g><rect x="31" y="6.5" width="3.5" height="12" fill="url(#wg2)"/></svg>
<svg style="left:295px;top:1038px" width="40" height="36" viewBox="0 0 40 36"><defs><linearGradient id="mg" x1="0" y1="0" x2="1" y2="0"><stop offset="0" stop-color="#fafafa"/><stop offset="1" stop-color="#b8b8b8"/></linearGradient></defs><path d="M2 9 L8 6 L8 27 L2 30 Z" fill="#9a9aa0"/><path d="M3 9.5 L7.5 7.5 L7.5 26 L3 28.5 Z" fill="url(#mg)"/><rect x="2.6" y="11" width="1.3" height="3" fill="#30c030"/><ellipse cx="22" cy="32" rx="8.5" ry="3" fill="#e4e4e4" stroke="#b0b0b0" stroke-width=".6"/><path d="M19 24 L25 26 L25 31 L19 31 Z" fill="#d8d8d8"/><path d="M9 1.5 L36.5 6.5 L33.5 28.5 L10.5 22 Z" fill="#e8e8e8" stroke="#a8a8a8" stroke-width=".6"/><path d="M11 3.8 L34.3 8.2 L31.8 26 L12.2 20.4 Z" fill="#101810"/><path d="M12 14 L15 12 L17 16 L19 8 L21 17 L23 13 L25 18 L27 10 L29 19 L31 15 L33 17" fill="none" stroke="#2ad040" stroke-width="1.1"/><g stroke="#1f8a2c" stroke-width=".6"><line x1="11.5" y1="7" x2="34" y2="11"/><line x1="11.7" y1="10" x2="33.6" y2="14"/><line x1="12" y1="17" x2="32.6" y2="22"/></g></svg>
<svg style="left:364px;top:1035px" width="42" height="42" viewBox="0 0 42 42" shape-rendering="crispEdges"><g stroke="#00e000" stroke-width="1"><line x1="1.5" y1="1" x2="1.5" y2="42"/><line x1="1" y1="1.5" x2="42" y2="1.5"/><line x1="6.5" y1="1" x2="6.5" y2="42"/><line x1="1" y1="6.5" x2="42" y2="6.5"/><line x1="11.5" y1="1" x2="11.5" y2="42"/><line x1="1" y1="11.5" x2="42" y2="11.5"/><line x1="16.5" y1="1" x2="16.5" y2="42"/><line x1="1" y1="16.5" x2="42" y2="16.5"/><line x1="21.5" y1="1" x2="21.5" y2="42"/><line x1="1" y1="21.5" x2="42" y2="21.5"/><line x1="26.5" y1="1" x2="26.5" y2="42"/><line x1="1" y1="26.5" x2="42" y2="26.5"/><line x1="31.5" y1="1" x2="31.5" y2="42"/><line x1="1" y1="31.5" x2="42" y2="31.5"/><line x1="36.5" y1="1" x2="36.5" y2="42"/><line x1="1" y1="36.5" x2="42" y2="36.5"/><line x1="41.5" y1="1" x2="41.5" y2="42"/><line x1="1" y1="41.5" x2="42" y2="41.5"/></g><path d="M1.5 26.5 L8 26.5 L10.5 22 L12 10 L14 7 L25 7 L27 10 L28.5 20 L32 24.5 L38 24.5 L41.5 27" fill="none" stroke="#f0e020" stroke-width="1.2" shape-rendering="auto"/><g fill="#b00000"><rect x="2" y="29" width="10" height="2"/><rect x="11" y="31" width="8" height="2"/><rect x="17" y="29" width="8" height="2"/><rect x="24" y="30" width="2" height="5"/><rect x="25" y="33" width="16" height="2"/><rect x="2" y="34" width="10" height="2"/><rect x="11" y="35" width="2" height="5"/><rect x="12" y="39" width="16" height="2"/><rect x="27" y="37" width="14" height="2"/></g><g shape-rendering="auto"><circle cx="35.5" cy="6.5" r="3.6" fill="#e82020"/><path d="M33.5 8 Q34.5 4.5 36 6.5 Q37 8 37.8 4.8" stroke="#fff" stroke-width="1.1" fill="none"/></g></svg>
<svg style="left:1660px;top:1032px" width="260" height="48" viewBox="0 0 260 48"><path d="M11.5 27.5 L16.5 22 L21.5 27.5 Z" fill="#e8e8f0"/><rect x="40" y="18" width="11" height="16.5" rx="1.5" fill="none" stroke="#fff" stroke-width="1.3"/><rect x="43" y="16" width="5" height="2" fill="#fff"/><rect x="42" y="22" width="7" height="10.5" fill="#fff"/><path d="M53 17 L53 21 M57 17 L57 21" stroke="#fff" stroke-width="1.4"/><path d="M51.5 21 L58.5 21 L58.5 24 Q58.5 27 55 27 Q51.5 27 51.5 24 Z" fill="#fff"/><rect x="54" y="27" width="2" height="8" fill="#fff"/><path d="M71 16 L71 34.5" stroke="#fff" stroke-width="1.6"/><path d="M72.5 17.5 Q76 15.5 79.5 17.5 Q83 19.5 87.5 18.5 Q86 21 87 25.5 Q83 27 79.5 25 Q76 23 72.5 25 Z" fill="#fff"/><path d="M100 21.5 L103.5 21.5 L108 16 L108 34 L103.5 28.5 L100 28.5 Z" fill="#fff" stroke="#d8d8d8" stroke-width=".5"/><path d="M111.5 21 Q114 25 111.5 29" fill="none" stroke="#fff" stroke-width="1.1"/><path d="M114.5 18.5 Q119 25 114.5 31.5" fill="none" stroke="#e0e0e0" stroke-width="1"/><rect x="132" y="28.5" width="2" height="3" fill="#fff"/><rect x="135" y="26" width="2" height="5.5" fill="#fff"/><rect x="138" y="23.5" width="2" height="8" fill="#fff"/><rect x="141" y="21" width="2" height="10.5" fill="#fff"/><rect x="144" y="18.5" width="2" height="13" fill="#fff"/></svg>
<div class="t " style="left:1835.5px;top:1038px;font-size:15.5px;line-height:17px;height:17px;color:#fff;letter-spacing:-0.85px;">7:55 PM</div>
<div class="t " style="left:1827.0px;top:1059px;font-size:15.5px;line-height:17px;height:17px;color:#fff;letter-spacing:-0.10px;">1/25/2019</div>
<div class="a" style="left:1905px;top:1032px;width:15px;height:48px;border-left:1px solid rgba(20,18,26,.8);box-shadow:inset 1px 1px 0 rgba(255,255,255,.4);background:linear-gradient(135deg,rgba(255,255,255,.28) 0%,rgba(255,255,255,.10) 40%,rgba(255,255,255,.04) 100%)"></div>
</div></body></html>
